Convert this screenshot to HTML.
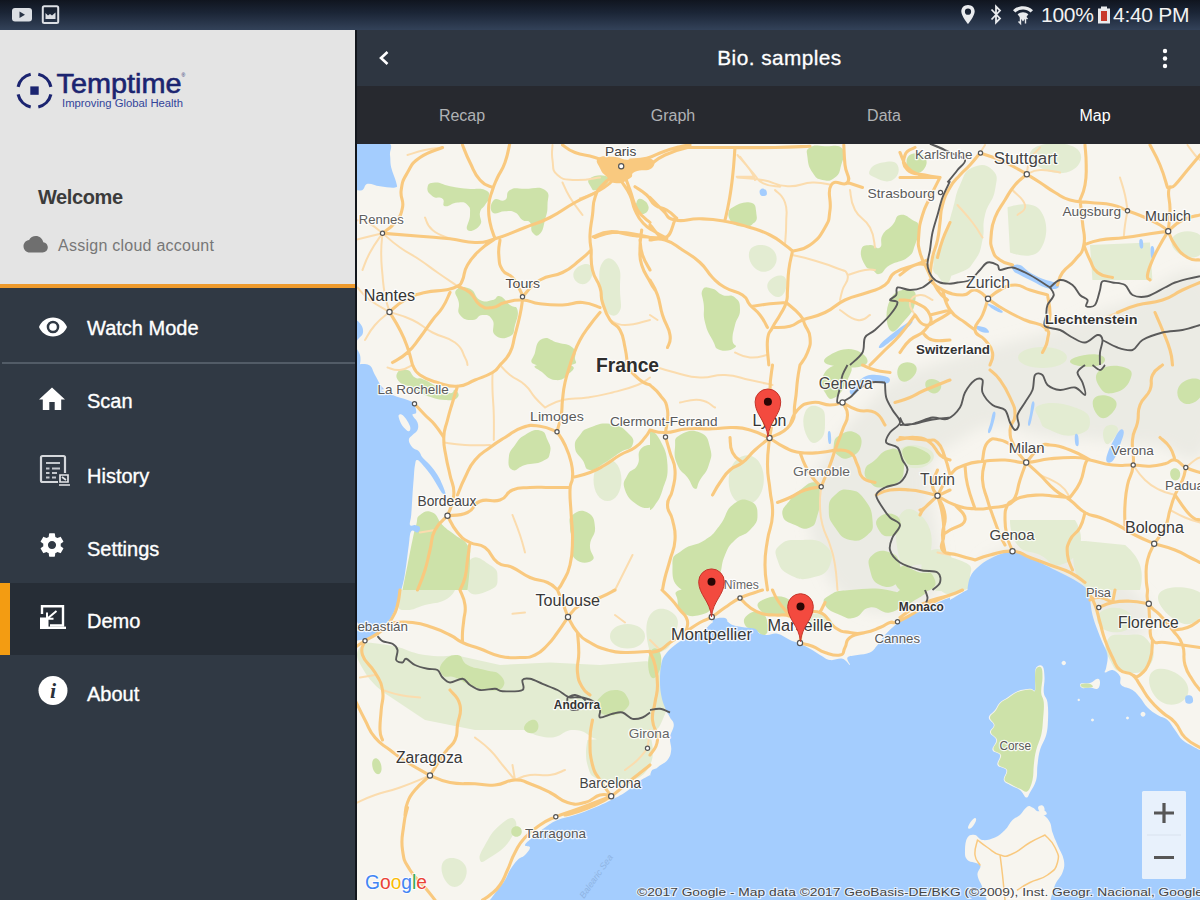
<!DOCTYPE html>
<html lang="en">
<head>
<meta charset="utf-8">
<title>Bio. samples - Map</title>
<style>
html,body{margin:0;padding:0;}
body{width:1200px;height:900px;overflow:hidden;position:relative;background:#303944;font-family:"Liberation Sans",sans-serif;}
.abs{position:absolute;}
#status{left:0;top:0;width:1200px;height:29.5px;background:linear-gradient(#10151f 0%,#1b2536 42%,#334259 100%);}
#status .txt{position:absolute;top:3px;color:#f2f2f2;font-size:21px;line-height:24px;letter-spacing:-0.3px;white-space:nowrap;}
#drawerTop{left:0;top:29.5px;width:355.5px;height:255.5px;background:#e4e4e4;}
#orange{left:0;top:284px;width:355.5px;height:4px;background:#ee9a2c;}
#drawer{left:0;top:288px;width:355.5px;height:612px;background:#303944;}
#edge{left:354.5px;top:29.5px;width:2.5px;height:871px;background:#12161c;}
.mi{position:absolute;left:0;width:355px;height:72px;}
#drawer .lbl{position:absolute;left:87px;color:#fff;font-size:20px;line-height:24px;white-space:nowrap;-webkit-text-stroke:0.35px #fff;}
.mi svg{position:absolute;}
#appbar{left:357px;top:29.5px;width:843px;height:56.5px;background:#2e3641;}
#tabs{left:357px;top:86px;width:843px;height:58px;background:#27292f;}
.tab{position:absolute;top:19.5px;width:120px;text-align:center;color:#b0b2b5;font-size:16px;line-height:20px;}
#map{left:357px;top:144px;width:843px;height:756px;background:#f6f3ec;overflow:hidden;}
</style>
</head>
<body>
<!-- status bar -->
<div id="status" class="abs">
  <svg class="abs" style="left:0;top:0" width="80" height="30" viewBox="0 0 80 30">
    <rect x="12" y="8" width="20" height="13.5" rx="3" fill="#dcdfe4"/>
    <path d="M19.5 11.5 L25 14.7 L19.5 18z" fill="#283345"/>
    <rect x="42.8" y="6.3" width="15.4" height="16.6" rx="1.5" fill="none" stroke="#dcdfe4" stroke-width="2"/>
    <path d="M45.5 19 L45.5 13 L48 15.5 L50 14 L52 15.5 L55.5 12.5 L55.5 19z" fill="#dcdfe4"/>
  </svg>
  <svg class="abs" style="left:950px;top:0" width="90" height="30" viewBox="0 0 90 30">
    <!-- location pin -->
    <path d="M18 5 C14 5 11.3 7.8 11.3 11.5 C11.3 16 18 24 18 24 C18 24 24.7 16 24.7 11.5 C24.7 7.8 22 5 18 5z M18 8.6 a3.1 3.1 0 1 1 0 6.2 a3.1 3.1 0 1 1 0 -6.2z" fill="#e9ebee" fill-rule="evenodd"/>
    <!-- bluetooth -->
    <path d="M41.5 9.5 L50 18.5 L46 22.5 L46 6.5 L50 10.5 L41.5 19.5" fill="none" stroke="#e9ebee" stroke-width="1.8"/>
    <!-- wifi -->
    <path d="M63 10.2 C68 4.8 78 4.8 83 10.2 L80.6 12.6 C76.5 8.6 69.5 8.6 65.4 12.6z" fill="#e9ebee"/>
    <path d="M67.6 14.3 C70.5 11.6 75.5 11.6 78.4 14.3 L73 21.5z" fill="#e9ebee"/>
    <path d="M70.5 17 l0 6.5 l-2 -2 M75.5 23.5 l0 -6.5 l2 2" fill="none" stroke="#e9ebee" stroke-width="1.4"/>
  </svg>
  <div class="txt" style="left:1041px;">100%</div>
  <svg class="abs" style="left:1095px;top:0" width="20" height="30" viewBox="0 0 20 30">
    <path d="M3 8.5 h3 v-2 h6 v2 h3 v15 h-12z" fill="#e9ebee"/>
    <path d="M6 11 h6 v10 h-6z" fill="#c8392b"/>
  </svg>
  <div class="txt" style="left:1113px;">4:40 PM</div>
</div>

<!-- drawer header -->
<div id="drawerTop" class="abs">
  <svg class="abs" style="left:10px;top:36px" width="200" height="50" viewBox="0 0 200 50" font-family="Liberation Sans, sans-serif">
    <g fill="none" stroke="#1b2470" stroke-width="3.1"><path d="M28.3 8.2 A16.8 16.8 0 0 1 40.9 20.8"/><path d="M40.9 28.4 A16.8 16.8 0 0 1 28.3 41.0"/><path d="M20.7 41.0 A16.8 16.8 0 0 1 8.1 28.4"/><path d="M8.1 20.8 A16.8 16.8 0 0 1 20.7 8.2"/></g>
    <rect x="20.300" y="20.400" width="8.400" height="8.400" fill="#1b2470"/>
    <text x="46.500" y="26.500" font-size="27.500" fill="#1b2470" stroke="#1b2470" stroke-width="0.600" textLength="125" lengthAdjust="spacingAndGlyphs">Temptime</text>
    <text x="171.500" y="10.500" font-size="5" fill="#1b2470">®</text>
    <text x="52" y="41.300" font-size="10" fill="#33449a" textLength="121" lengthAdjust="spacingAndGlyphs">Improving Global Health</text>
  </svg>
  <div class="abs" style="left:38px;top:155.500px;color:#3b3b3b;font-size:20px;font-weight:bold;line-height:24px;letter-spacing:-0.4px;">Welcome</div>
  <svg class="abs" style="left:21px;top:204px" width="28" height="20" viewBox="0 0 28 20">
    <path d="M22.3 8.2 C21.6 4.6 18.5 2 14.8 2 C11.9 2 9.4 3.6 8.1 6 C4.9 6.4 2.5 9 2.5 12.2 C2.5 15.7 5.3 18.5 8.8 18.5 L21.6 18.5 C24.5 18.5 26.8 16.2 26.8 13.3 C26.8 10.6 24.7 8.4 22.3 8.2z" fill="#6f6f6f"/>
  </svg>
  <div class="abs" style="left:58px;top:206px;color:#777;font-size:16px;line-height:20px;letter-spacing:0.25px;white-space:nowrap;">Assign cloud account</div>
</div>
<div id="orange" class="abs"></div>

<!-- drawer menu -->
<div id="drawer" class="abs">
  <div class="abs" style="left:2px;top:74px;width:353px;height:2px;background:#525c67;"></div>
  <div class="abs" style="left:0;top:295px;width:355px;height:72px;background:#262d36;"></div>
  <div class="abs" style="left:0;top:295px;width:10px;height:72px;background:#f39c12;"></div>
  <!-- Watch Mode -->
  <svg class="abs" style="left:38px;top:27px" width="30" height="24" viewBox="0 0 30 24"><path d="M15 2.5 C8.5 2.5 3.2 6.4 1 12 C3.2 17.6 8.5 21.5 15 21.5 C21.5 21.5 26.800 17.6 29 12 C26.8 6.400 21.5 2.5 15 2.5z M15 18.300 a6.300 6.300 0 1 1 0 -12.600 a6.300 6.300 0 1 1 0 12.600z M15 8.200 a3.800 3.800 0 1 0 0 7.600 a3.800 3.800 0 1 0 0 -7.600z" fill="#fff" fill-rule="evenodd"/></svg>
  <div class="lbl" style="top:28px;">Watch Mode</div>
  <!-- Scan -->
  <svg class="abs" style="left:38px;top:98px" width="28" height="26" viewBox="0 0 28 26"><path d="M14 1.500 L1 13.500 L4.800 13.500 L4.800 24 L11.300 24 L11.300 16 L16.700 16 L16.700 24 L23.200 24 L23.200 13.500 L27 13.500z" fill="#fff"/></svg>
  <div class="lbl" style="top:101px;">Scan</div>
  <!-- History -->
  <svg class="abs" style="left:38px;top:165px" width="34" height="36" viewBox="0 0 34 36">
    <rect x="3" y="3" width="24" height="26" rx="1.500" fill="none" stroke="#d5d8dc" stroke-width="2.200"/>
    <path d="M8 10 H22 M8 15.500 H11.500 M14 15.500 H22 M8 20 H11.500 M14 20 H19 M8 24.500 H11.500 M14 24.500 H18" stroke="#c4c8cd" stroke-width="2" fill="none"/>
    <rect x="20" y="20" width="12" height="13" fill="#303944"/>
    <path d="M22 22 H30 V29 H22z M24 24 L28 27 M21 32 H32" stroke="#e3e5e8" stroke-width="1.700" fill="none"/>
  </svg>
  <div class="lbl" style="top:176px;">History</div>
  <!-- Settings -->
  <svg class="abs" style="left:38px;top:243px" width="28" height="28" viewBox="0 0 24 24"><path d="M19.430 12.980c.040-.320.070-.640.070-.980s-.030-.660-.070-.980l2.110-1.650c.190-.150.240-.420.120-.640l-2-3.460c-.120-.220-.390-.300-.610-.220l-2.490 1c-.520-.400-1.080-.730-1.690-.980l-.380-2.650C14.460 2.180 14.250 2 14 2h-4c-.250 0-.460.180-.490.420l-.380 2.650c-.610.250-1.170.590-1.690.980l-2.490-1c-.230-.090-.490 0-.610.220l-2 3.460c-.130.220-.070.490.120.640l2.110 1.650c-.040.320-.070.650-.070.980s.030.660.070.980l-2.110 1.650c-.190.150-.240.420-.120.640l2 3.460c.120.220.390.300.610.220l2.490-1c.520.400 1.080.730 1.690.980l.380 2.650c.030.240.240.420.490.420h4c.250 0 .460-.180.490-.420l.380-2.650c.610-.250 1.170-.590 1.690-.980l2.490 1c.230.090.490 0 .610-.220l2-3.460c.120-.220.070-.490-.120-.640l-2.110-1.650zM12 15.500c-1.930 0-3.500-1.570-3.500-3.500s1.570-3.500 3.500-3.500 3.500 1.570 3.500 3.500-1.570 3.500-3.500 3.500z" fill="#fff"/></svg>
  <div class="lbl" style="top:249px;">Settings</div>
  <!-- Demo -->
  <svg class="abs" style="left:38px;top:315px" width="30" height="28" viewBox="0 0 30 28">
    <path d="M4 11 V3.200 H25 V22.500 H12" fill="none" stroke="#fff" stroke-width="2.400"/>
    <rect x="2" y="14.500" width="8.500" height="11.500" fill="#fff"/>
    <path d="M10 24.800 H28" stroke="#fff" stroke-width="2.400"/>
    <path d="M18.500 8 L9.500 15.500 M9 9.500 L9 15.800 L15.500 15.800" stroke="#fff" stroke-width="2" fill="none"/>
  </svg>
  <div class="lbl" style="top:321px;">Demo</div>
  <!-- About -->
  <svg class="abs" style="left:37px;top:387px" width="32" height="32" viewBox="0 0 32 32"><circle cx="16" cy="15.500" r="14.500" fill="#fff"/><text x="16" y="23" text-anchor="middle" font-family="Liberation Serif,serif" font-style="italic" font-weight="bold" font-size="22" fill="#2a313b">i</text></svg>
  <div class="lbl" style="top:394px;">About</div>
</div>

<div id="edge" class="abs"></div>

<!-- app bar -->
<div id="appbar" class="abs">
  <svg class="abs" style="left:17px;top:18px" width="20" height="20" viewBox="0 0 20 20"><path d="M13.5 4 L7 10 L13.5 16" fill="none" stroke="#fff" stroke-width="2.6"/></svg>
  <div class="abs" style="left:1.500px;top:15.500px;width:842px;text-align:center;color:#fff;font-size:20.800px;line-height:26px;letter-spacing:0.45px;-webkit-text-stroke:0.3px #fff;">Bio. samples</div>
  <svg class="abs" style="left:801px;top:16px" width="14" height="26" viewBox="0 0 14 26"><circle cx="7" cy="5" r="2.2" fill="#fff"/><circle cx="7" cy="12.5" r="2.2" fill="#fff"/><circle cx="7" cy="20" r="2.2" fill="#fff"/></svg>
</div>

<!-- tabs -->
<div id="tabs" class="abs">
  <div class="tab" style="left:45px;">Recap</div>
  <div class="tab" style="left:256px;">Graph</div>
  <div class="tab" style="left:467px;">Data</div>
  <div class="tab" style="left:678px;color:#fff;">Map</div>
</div>

<!-- map -->
<div id="map" class="abs">
<svg width="843" height="756" viewBox="357 144 843 756" style="position:absolute;left:0;top:0;display:block" font-family="Liberation Sans, sans-serif">
<rect x="357" y="144" width="843" height="756" fill="#f7f5ef"/>
<defs><filter id="tb" x="-10%" y="-10%" width="120%" height="120%"><feGaussianBlur stdDeviation="7"/></filter></defs>
<path fill="#e0e1da" fill-opacity="0.5" filter="url(#tb)" d="M872 400 C890.7 380.8 881.9 388.1 900 378 C918.1 367.9 913.3 370.8 940 362 C966.7 353.2 968 354.1 1000 345 C1032 335.9 1028 338.7 1060 328 C1092 317.3 1080 316.5 1120 305 C1160 293.5 1186 249 1210 285 C1234 321 1226 397.3 1210 440 C1194 482.7 1179.3 445 1150 445 C1120.7 445 1129.3 442.7 1100 440 C1070.7 437.3 1066.7 439 1040 435 C1013.3 431 1021.3 423.7 1000 425 C978.7 426.3 978.7 428 960 440 C941.3 452 936.7 448.7 930 470 C923.3 491.3 932.3 496 935 520 C937.7 544 941.3 538.7 940 560 C938.7 581.3 943.3 586.1 930 600 C916.7 613.9 911.3 612 890 612 C868.7 612 868.7 613.9 850 600 C831.3 586.1 830.7 586.7 820 560 C809.3 533.3 807.3 529.3 810 500 C812.7 470.7 813.5 476.7 830 450 C846.5 423.3 853.3 419.2 872 400Z M985 560 C995.7 550.7 1012 545 1040 545 C1068 545 1066 549.3 1090 560 C1114 570.7 1114 569 1130 585 C1146 601 1152.7 605.3 1150 620 C1147.3 634.7 1138.7 645.3 1120 640 C1101.3 634.7 1101.3 616 1080 600 C1058.7 584 1061.3 585.3 1040 580 C1018.7 574.7 1014.7 585.3 1000 580 C985.3 574.7 974.3 569.3 985 560Z"/>
<path fill="#e3ecd2" d="M602.5 262.5 C607.2 255.8 612.8 257.7 617.5 265 C622.2 272.3 619.7 277.3 620 290 C620.3 302.7 622.8 307.2 618.8 312.5 C614.8 317.8 610 316 605 310 C600 304 600.7 302.7 600 290 C599.3 277.3 597.8 269.2 602.5 262.5Z M575 270 C578.3 265.3 586 262.3 590 265 C594 267.7 593.3 275.3 590 280 C586.7 284.7 581.5 285.2 577.5 282.5 C573.5 279.8 571.7 274.7 575 270Z M870 170 C872 166 875.2 163.8 882.5 162.5 C889.8 161.2 894.8 160.3 897.5 165 C900.2 169.7 898.5 176.7 892.5 180 C886.5 183.3 881 180.2 875 177.5 C869 174.8 868 174 870 170Z M935 255 C938.3 247.7 946 240.8 950 247.5 C954 254.2 953.3 272.7 950 280 C946.7 287.3 941.5 281.7 937.5 275 C933.5 268.3 931.7 262.3 935 255Z M750 250 C753.3 244 763.3 243.5 770 247.5 C776.7 251.5 778.3 259 775 265 C771.7 271 764.2 274 757.5 270 C750.8 266 746.7 256 750 250Z M770 280 C774 276 781.7 273.5 785 277.5 C788.3 281.5 786.5 291 782.5 295 C778.5 299 773.3 296.5 770 292.5 C766.7 288.5 766 284 770 280Z M972.5 167.5 C981.2 163.5 986.5 164 992.5 170 C998.5 176 997 178 995 190 C993 202 988.3 201.7 985 215 C981.7 228.3 985.2 228 982.5 240 C979.8 252 981 251.3 975 260 C969 268.7 970 268.5 960 272.5 C950 276.5 944.2 279 937.5 275 C930.8 271 933 268.2 935 257.5 C937 246.8 940.3 247.7 945 235 C949.7 222.3 948.5 223.3 952.5 210 C956.5 196.7 954.7 196.3 960 185 C965.3 173.7 963.8 171.5 972.5 167.5Z M1007.5 207.5 C1007.5 207.5 1031.3 198.7 1040 210 C1048.7 221.3 1048 238.7 1040 250 C1032 261.3 1010 252.5 1010 252.5 L1007.5 207.5Z M1090 245 L1150 242.5 C1150 242.5 1152.5 280 1152.5 280 L1092.5 280 C1092.5 280 1090 245 1090 245Z M1175 235 C1181 230.3 1193.3 229.7 1200 235 C1206.7 240.3 1206 250.3 1200 255 C1194 259.7 1184.2 257.8 1177.5 252.5 C1170.8 247.2 1169 239.7 1175 235Z M1025 350 C1034.3 346 1050.7 346 1060 350 C1069.3 354 1069.3 361 1060 365 C1050.7 369 1034.3 369 1025 365 C1015.7 361 1015.7 354 1025 350Z M1035 147.5 C1044.3 142.2 1065 141.5 1075 147.5 C1085 153.5 1081.8 164.7 1072.5 170 C1063.2 175.3 1050 173.5 1040 167.5 C1030 161.5 1025.7 152.8 1035 147.5Z M470 560 C476 553.3 482.7 560.3 490 565 C497.3 569.7 497.5 570.8 497.5 577.5 C497.5 584.2 498 586.7 490 590 C482 593.3 472.8 598 467.5 590 C462.2 582 464 566.7 470 560Z M597.5 465 C602.8 457 612.2 457 617.5 465 C622.8 473 622.8 487 617.5 495 C612.2 503 602.8 503 597.5 495 C592.2 487 592.2 473 597.5 465Z M805 412.5 C808.3 404.5 814.7 404.8 820 407.5 C825.3 410.2 825 413.8 825 422.5 C825 431.2 824.7 436 820 440 C815.3 444 811.5 444.8 807.5 437.5 C803.5 430.2 801.7 420.5 805 412.5Z M902.5 447.5 C909.2 443.5 923.3 445.3 930 450 C936.7 454.7 934.2 461 927.5 465 C920.8 469 911.7 469.7 905 465 C898.3 460.3 895.8 451.5 902.5 447.5Z M780 545 C786 539.7 788 540 800 540 C812 540 817 538.3 825 545 C833 551.7 833.3 556.3 830 565 C826.7 573.7 823.2 574.8 812.5 577.5 C801.8 580.2 799.3 579.7 790 575 C780.7 570.3 780.2 568 777.5 560 C774.8 552 774 550.3 780 545Z M925 555 C931 547 943.3 547 950 555 C956.7 563 956 577 950 585 C944 593 934.2 593 927.5 585 C920.8 577 919 563 925 555Z M732.5 465 C738.5 454.3 750.2 452 757.5 460 C764.8 468 766 484.3 760 495 C754 505.7 742.3 508 735 500 C727.7 492 726.5 475.7 732.5 465Z M1040 405 C1049.3 401.7 1061.7 402.8 1075 407.5 C1088.3 412.2 1090 415.2 1090 422.5 C1090 429.8 1085.7 433 1075 435 C1064.3 437 1059.3 434 1050 430 C1040.7 426 1042.7 426.7 1040 420 C1037.3 413.3 1030.7 408.3 1040 405Z M1105 427.5 C1108.3 423.5 1115.5 424.2 1117.5 427.5 C1119.5 430.8 1115.8 436 1112.5 440 C1109.2 444 1107 445.8 1105 442.5 C1103 439.2 1101.7 431.5 1105 427.5Z M1010 520 L1075 520 C1075 520 1084 533 1080 545 C1076 557 1070.7 562.3 1060 565 C1049.3 567.7 1051.3 560.3 1040 555 C1028.7 549.7 1025.5 554.3 1017.5 545 C1009.5 535.7 1010 520 1010 520Z M1075 540 L1125 545 C1125 545 1136 553 1140 565 C1144 577 1140 590 1140 590 L1090 590 C1090 590 1079 583.3 1075 570 C1071 556.7 1075 540 1075 540Z M900 515 C906.7 504.3 917 509.3 925 520 C933 530.7 932.7 543 930 555 C927.3 567 923 563.7 915 565 C907 566.3 904 573.3 900 560 C896 546.7 893.3 525.7 900 515Z M932.5 560 C939.2 552.7 955 557.8 965 562.5 C975 567.2 970 570.2 970 577.5 C970 584.8 973 586.7 965 590 C957 593.3 948.7 598 940 590 C931.3 582 925.8 567.3 932.5 560Z M401.2 590 L455 590 C455 590 453 596 445 600 C437 604 435 602.3 425 605 C415 607.7 414.8 610 407.5 610 C400.2 610 399.2 610.3 397.5 605 C395.8 599.7 401.2 590 401.2 590Z M360 647.5 C366 640.2 370.2 643 387.5 645 C404.8 647 407 652.3 425 655 C443 657.7 455 655 455 655 L500 665 L550 662.5 L600 665 L645 661.2 C645 661.2 659 661 665 670 C671 679 668.2 681.7 667.5 695 C666.8 708.3 667.2 710 662.5 720 C657.8 730 660 727.2 650 732.5 C640 737.8 638.3 738 625 740 C611.7 742 613.3 742.7 600 740 C586.7 737.3 588.3 730.7 575 730 C561.7 729.3 563.3 737.5 550 737.5 C536.7 737.5 525 730 525 730 L475 730 L425 720 L387.5 695 C387.5 695 372.3 685.2 365 672.5 C357.7 659.8 354 654.8 360 647.5Z M615 627.5 C621.7 622.8 633.3 622.8 640 627.5 C646.7 632.2 646.7 640.3 640 645 C633.3 649.7 621.7 649.7 615 645 C608.3 640.3 608.3 632.2 615 627.5Z M587.5 740 L650 735 C650 735 656.7 752.3 650 765 C643.3 777.7 638.3 778.5 625 782.5 C611.7 786.5 610 784.7 600 780 C590 775.3 590.8 775.7 587.5 765 C584.2 754.3 587.5 740 587.5 740Z M650 615 C656.7 605 669 608.3 675 615 C681 621.7 676.5 630 672.5 640 C668.5 650 666 649.2 660 652.5 C654 655.8 652.7 662.5 650 652.5 C647.3 642.5 643.3 625 650 615Z M805 617.5 C809 613.5 818.3 612.3 825 615 C831.7 617.7 834 623.5 830 627.5 C826 631.5 816.7 632.7 810 630 C803.3 627.3 801 621.5 805 617.5Z M1107.5 640 C1111.5 633.3 1114.3 635 1125 635 C1135.7 635 1140.8 632 1147.5 640 C1154.2 648 1156 656.3 1150 665 C1144 673.7 1135.7 673.8 1125 672.5 C1114.3 671.2 1114.7 668.7 1110 660 C1105.3 651.3 1103.5 646.7 1107.5 640Z M1160 592.5 C1166.7 585.2 1189.3 585.8 1200 592.5 C1210.7 599.2 1206.7 610.2 1200 617.5 C1193.3 624.8 1185.7 626.7 1175 620 C1164.3 613.3 1153.3 599.8 1160 592.5Z M1150 675 C1153.3 667 1165 667.2 1175 672.5 C1185 677.8 1190.8 687 1187.5 695 C1184.2 703 1172.5 707.8 1162.5 702.5 C1152.5 697.2 1146.7 683 1150 675Z M1100 612.5 C1105.3 607.2 1117 606 1125 610 C1133 614 1135.3 622.2 1130 627.5 C1124.7 632.8 1113 634 1105 630 C1097 626 1094.7 617.8 1100 612.5Z M500 825 C508 818.3 512.3 816 515 820 C517.7 824 516.7 830 510 840 C503.3 850 498 852.2 490 857.5 C482 862.8 481.3 863.3 480 860 C478.7 856.7 479.7 854.3 485 845 C490.3 835.7 492 831.7 500 825Z M445 860 C450.3 856 461 858.3 465 865 C469 871.7 465.3 881 460 885 C454.7 889 449 886.7 445 880 C441 873.3 439.7 864 445 860Z"/>
<path fill="#cde2a9" d="M427.5 187.5 C428.2 183.8 429 182.8 435 182.5 C441 182.2 441.3 184.5 450 186.2 C458.7 187.9 458.2 187.8 467.5 188.8 C476.8 189.8 479.3 187.7 485 190 C490.7 192.3 488.8 193.5 488.8 197.5 C488.8 201.5 487.3 201 485 205 C482.7 209 481.3 207.2 480 212.5 C478.7 217.8 483.3 220.3 480 225 C476.7 229.7 470.2 232.7 467.5 230 C464.8 227.3 470 221.7 470 215 C470 208.3 470.8 208.3 467.5 205 C464.2 201.7 463.5 202.2 457.5 202.5 C451.5 202.8 449 207.2 445 206.2 C441 205.2 445.8 201.5 442.5 198.8 C439.2 196.1 436.5 199.2 432.5 196.2 C428.5 193.2 426.8 191.2 427.5 187.5Z M510 190 C515.3 187 515.7 188.8 525 188.8 C534.3 188.8 539 185.7 545 190 C551 194.3 547.5 197 547.5 205 C547.5 213 547 212.3 545 220 C543 227.7 543.3 230.5 540 233.8 C536.7 237.1 535.2 235.5 532.5 232.5 C529.8 229.5 532.7 225.8 530 222.5 C527.3 219.2 526.5 222.7 522.5 220 C518.5 217.3 519.7 214.8 515 212.5 C510.3 210.2 511 211.2 505 211.2 C499 211.2 495.5 215.5 492.5 212.5 C489.5 209.5 490.5 203.3 493.8 200 C497.1 196.7 500.7 202.7 505 200 C509.3 197.3 504.7 193 510 190Z M637.5 200 C639.5 197.3 643.5 199.5 646.2 202.5 C648.9 205.5 649.5 208.5 647.5 211.2 C645.5 213.9 641.5 215.5 638.8 212.5 C636.1 209.5 635.5 202.7 637.5 200Z M456.2 290 C459.2 286.3 463.7 286.1 470 288.8 C476.3 291.5 474 297 480 300 C486 303 487.2 301 492.5 300 C497.8 299 495.3 294.9 500 296.2 C504.7 297.5 505.3 301.3 510 305 C514.7 308.7 516.2 304.7 517.5 310 C518.8 315.3 517 318 515 325 C513 332 515.3 333.5 510 336.2 C504.7 338.9 499.7 339.3 495 335 C490.3 330.7 495.8 325.3 492.5 320 C489.2 314.7 487.8 315 482.5 315 C477.2 315 478.5 320 472.5 320 C466.5 320 463.7 319.7 460 315 C456.3 310.3 459.8 309.2 458.8 302.5 C457.8 295.8 453.2 293.7 456.2 290Z M542.5 338.8 C548.5 336.1 549.5 340.2 557.5 342.5 C565.5 344.8 567.8 343.5 572.5 347.5 C577.2 351.5 575.7 352.8 575 357.5 C574.3 362.2 580.3 363 570 365 C559.7 367 545.5 368.3 536.2 365 C526.9 361.7 533.3 359.5 535 352.5 C536.7 345.5 536.5 341.5 542.5 338.8Z M810 147.5 C814.7 144.5 816.3 145.9 825 146.2 C833.7 146.5 838.2 143.8 842.5 148.8 C846.8 153.8 843.2 157.3 841.2 165 C839.2 172.7 840 173.5 835 177.5 C830 181.5 828.5 181.3 822.5 180 C816.5 178.7 816.5 178.5 812.5 172.5 C808.5 166.5 808.2 164.2 807.5 157.5 C806.8 150.8 805.3 150.5 810 147.5Z M732.5 207.5 C737.8 204.2 743.7 201.2 750 202.5 C756.3 203.8 755.5 206.8 756.2 212.5 C756.9 218.2 758.2 220.5 752.5 223.8 C746.8 227.1 741 227.3 735 225 C729 222.7 730.7 219.7 730 215 C729.3 210.3 727.2 210.8 732.5 207.5Z M702.5 290 C704.8 285.7 707.2 287.5 712.5 288.8 C717.8 290.1 716.5 292.7 722.5 295 C728.5 297.3 730.3 293.5 735 297.5 C739.7 301.5 740 302.7 740 310 C740 317.3 737 317 735 325 C733 333 732.5 334 732.5 340 C732.5 346 738.3 344.8 735 347.5 C731.7 350.2 726 352 720 350 C714 348 716.5 347.3 712.5 340 C708.5 332.7 707.3 331.8 705 322.5 C702.7 313.2 704.5 313.7 703.8 305 C703.1 296.3 700.2 294.3 702.5 290Z M900 215 C905.3 213.7 907.5 216.7 912.5 220 C917.5 223.3 918.1 220.8 918.8 227.5 C919.5 234.2 918 237 915 245 C912 253 914.2 252.2 907.5 257.5 C900.8 262.8 897.3 260.7 890 265 C882.7 269.3 884.7 272.5 880 273.8 C875.3 275.1 876.5 272.3 872.5 270 C868.5 267.7 868 270.3 865 265 C862 259.7 859.9 255.3 861.2 250 C862.5 244.7 865 245.7 870 245 C875 244.3 876.7 250.2 880 247.5 C883.3 244.8 879.2 241 882.5 235 C885.8 229 887.8 230.3 892.5 225 C897.2 219.7 894.7 216.3 900 215Z M907.5 157.5 C910.2 152.8 917.8 152.3 922.5 155 C927.2 157.7 927.7 162.8 925 167.5 C922.3 172.2 917.2 175.2 912.5 172.5 C907.8 169.8 904.8 162.2 907.5 157.5Z M890 300 C895.3 289.3 903.3 289.3 910 290 C916.7 290.7 916.3 294.5 915 302.5 C913.7 310.5 911.7 312.7 905 320 C898.3 327.3 894 335.3 890 330 C886 324.7 884.7 310.7 890 300Z M830 355 C836.7 351 845.7 347.3 855 350 C864.3 352.7 871.7 361 865 365 C858.3 369 839.3 367.7 830 365 C820.7 362.3 823.3 359 830 355Z M1075 357.5 C1081.7 354.8 1093.3 353 1100 355 C1106.7 357 1106.7 362.3 1100 365 C1093.3 367.7 1081.7 367 1075 365 C1068.3 363 1068.3 360.2 1075 357.5Z M397.5 372.5 C399.5 369.2 402.8 368.7 407.5 370 C412.2 371.3 410.3 374.8 415 377.5 C419.7 380.2 416.3 376 425 380 C433.7 384 439.5 389.8 447.5 392.5 C455.5 395.2 452.3 388.7 455 390 C457.7 391.3 460.2 394.8 457.5 397.5 C454.8 400.2 453.7 400.7 445 400 C436.3 399.3 433.7 398.3 425 395 C416.3 391.7 419.2 390.8 412.5 387.5 C405.8 384.2 404 386.5 400 382.5 C396 378.5 395.5 375.8 397.5 372.5Z M525 435 C531.7 431.1 534 429.2 540 430.5 C546 431.8 544.8 434.1 547.5 440 C550.2 445.9 551.3 446.8 550 452.5 C548.7 458.2 549.2 457.9 542.5 461.2 C535.8 464.5 533 462.7 525 465 C517 467.3 516.8 472 512.5 470 C508.2 468 508.1 464.2 508.8 457.5 C509.5 450.8 510.7 451 515 445 C519.3 439 518.3 438.9 525 435Z M590 427.5 C598 424.5 600 422.5 610 423.8 C620 425.1 621.5 426.8 627.5 432.5 C633.5 438.2 634.5 439.7 632.5 445 C630.5 450.3 627.3 447.8 620 452.5 C612.7 457.2 613 457.8 605 462.5 C597 467.2 596 470.7 590 470 C584 469.3 586.5 466 582.5 460 C578.5 454 575.7 454.2 575 447.5 C574.3 440.8 576 440.3 580 435 C584 429.7 582 430.5 590 427.5Z M640 450 C643.3 444.7 650 445 650 445 L650 507.5 C650 507.5 644.2 509.7 637.5 505 C630.8 500.3 627.7 498 625 490 C622.3 482 624.2 481.7 627.5 475 C630.8 468.3 634.2 471.7 637.5 465 C640.8 458.3 636.7 455.3 640 450Z M537.5 365 C544.8 363 562 362.3 570 365 C578 367.7 571.5 371 567.5 375 C563.5 379 561.7 380.7 555 380 C548.3 379.3 547.2 376.5 542.5 372.5 C537.8 368.5 530.2 367 537.5 365Z M572.5 515 C577.2 511 581.5 509.2 587.5 512.5 C593.5 515.8 594.3 518.8 595 527.5 C595.7 536.2 590.7 536.3 590 545 C589.3 553.7 596.5 556.3 592.5 560 C588.5 563.7 580.3 564.1 575 558.8 C569.7 553.5 573.8 548.3 572.5 540 C571.2 531.7 570 534.2 570 527.5 C570 520.8 567.8 519 572.5 515Z M420 515 C424.3 511.7 426.5 509.8 432.5 512.5 C438.5 515.2 436.5 519 442.5 525 C448.5 531 448.3 529.7 455 535 C461.7 540.3 463.5 538.3 467.5 545 C471.5 551.7 470 548 470 560 C470 572 467.5 590 467.5 590 L402.5 590 C402.5 590 404.8 578.3 407.5 565 C410.2 551.7 410.2 550.7 412.5 540 C414.8 529.3 414.2 531.7 416.2 525 C418.2 518.3 415.7 518.3 420 515Z M680 435 C686.7 431 692 429.2 700 432.5 C708 435.8 707.7 438.8 710 447.5 C712.3 456.2 711.5 456.3 708.8 465 C706.1 473.7 703.7 473.7 700 480 C696.3 486.3 698.3 489.5 695 488.8 C691.7 488.1 692.2 483.8 687.5 477.5 C682.8 471.2 680.8 473 677.5 465 C674.2 457 674.3 455.5 675 447.5 C675.7 439.5 673.3 439 680 435Z M650 430 C650 430 655.3 430.7 660 440 C664.7 449.3 666.8 451.7 667.5 465 C668.2 478.3 665.8 479.3 662.5 490 C659.2 500.7 658.3 499.7 655 505 C651.7 510.3 650 510 650 510 L650 430Z M732.5 505 C740.5 498.7 743.3 498.5 750 501.2 C756.7 503.9 757.5 507.3 757.5 515 C757.5 522.7 756 523.3 750 530 C744 536.7 741.7 533.3 735 540 C728.3 546.7 729 545.7 725 555 C721 564.3 722.7 565.7 720 575 C717.3 584.3 725 586 715 590 C705 594 693.8 596.7 682.5 590 C671.2 583.3 672.5 575.7 672.5 565 C672.5 554.3 673.8 556.7 682.5 550 C691.2 543.3 695 546.7 705 540 C715 533.3 712.7 534.3 720 525 C727.3 515.7 724.5 511.3 732.5 505Z M800 490 C806.7 485.3 809.7 481.2 815 482.5 C820.3 483.8 819.3 486.3 820 495 C820.7 503.7 820.2 506.3 817.5 515 C814.8 523.7 816 524.8 810 527.5 C804 530.2 802.3 528.3 795 525 C787.7 521.7 783.8 521.7 782.5 515 C781.2 508.3 785.3 506.7 790 500 C794.7 493.3 793.3 494.7 800 490Z M835 495 C840.7 489.7 842 488.7 850 490 C858 491.3 859 492 865 500 C871 508 871.8 510.7 872.5 520 C873.2 529.3 873.5 529.7 867.5 535 C861.5 540.3 858.7 542 850 540 C841.3 538 840.7 535.5 835 527.5 C829.3 519.5 828.8 518.7 828.8 510 C828.8 501.3 829.3 500.3 835 495Z M840 435 C845.7 431.7 849.3 429.8 855 432.5 C860.7 435.2 862.5 438.3 861.2 445 C859.9 451.7 856.3 454.8 850 457.5 C843.7 460.2 841.8 458.3 837.5 455 C833.2 451.7 833.1 450.3 833.8 445 C834.5 439.7 834.3 438.3 840 435Z M822.5 377.5 C825.2 370.2 827.7 368.3 835 365 C842.3 361.7 846.7 361 850 365 C853.3 369 851.5 371.3 847.5 380 C843.5 388.7 841 394.2 835 397.5 C829 400.8 828.3 397.8 825 392.5 C821.7 387.2 819.8 384.8 822.5 377.5Z M887.5 450 C894.2 448 895.7 447.2 900 452.5 C904.3 457.8 904.5 462 903.8 470 C903.1 478 903.2 477.8 897.5 482.5 C891.8 487.2 889.8 487.5 882.5 487.5 C875.2 487.5 874.7 487.2 870 482.5 C865.3 477.8 863.7 476 865 470 C866.3 464 869 465.3 875 460 C881 454.7 880.8 452 887.5 450Z M878.8 517.5 C883.1 513.5 889.3 512.3 895 515 C900.7 517.7 901.3 521.8 900 527.5 C898.7 533.2 895.7 535.5 890 536.2 C884.3 536.9 881.8 535 878.8 530 C875.8 525 874.5 521.5 878.8 517.5Z M872.5 555 C877.8 550.3 882.7 549.8 890 552.5 C897.3 555.2 898 557 900 565 C902 573 902.8 577.2 897.5 582.5 C892.2 587.8 887.3 588.3 880 585 C872.7 581.7 872 578 870 570 C868 562 867.2 559.7 872.5 555Z M905 447.5 C909.7 444.8 915.8 446.7 922.5 450 C929.2 453.3 932 456 930 460 C928 464 921.7 465 915 465 C908.3 465 907.7 464.7 905 460 C902.3 455.3 900.3 450.2 905 447.5Z M1100 370 C1106.7 364.7 1117 364.8 1125 367.5 C1133 370.2 1132.7 373.3 1130 380 C1127.3 386.7 1123 390.5 1115 392.5 C1107 394.5 1104 393.5 1100 387.5 C1096 381.5 1093.3 375.3 1100 370Z M1095 397.5 C1099.7 393.5 1111 395.3 1115 400 C1119 404.7 1114.7 411 1110 415 C1105.3 419 1101.5 419.7 1097.5 415 C1093.5 410.3 1090.3 401.5 1095 397.5Z M1180 385 C1184.7 379 1194.7 376.7 1200 380 C1205.3 383.3 1204.7 391.5 1200 397.5 C1195.3 403.5 1187.8 405.8 1182.5 402.5 C1177.2 399.2 1175.3 391 1180 385Z M900 567.5 C905.3 562.8 911.3 570.5 920 572.5 C928.7 574.5 929.8 570.3 932.5 575 C935.2 579.7 938.7 586 930 590 C921.3 594 908 596 900 590 C892 584 894.7 572.2 900 567.5Z M900 365 C904 361 911.7 361.7 915 365 C918.3 368.3 916.5 373.5 912.5 377.5 C908.5 381.5 903.3 383.3 900 380 C896.7 376.7 896 369 900 365Z M927.5 380 C930.8 378 937.3 379.2 940 382.5 C942.7 385.8 940.8 390.5 937.5 392.5 C934.2 394.5 930.2 393.3 927.5 390 C924.8 386.7 924.2 382 927.5 380Z M1171.2 470 C1173 467.7 1176.8 467.7 1178.8 470 C1180.8 472.3 1180.6 476.5 1178.8 478.8 C1177 481.1 1174 481.1 1172 478.8 C1170 476.5 1169.4 472.3 1171.2 470Z M442.5 662.5 C446.5 657.2 450.8 654.3 457.5 655 C464.2 655.7 460.2 661 467.5 665 C474.8 669 476.3 667.3 485 670 C493.7 672.7 495.3 670.3 500 675 C504.7 679.7 505.8 683.5 502.5 687.5 C499.2 691.5 496.2 690.7 487.5 690 C478.8 689.3 478.7 688.3 470 685 C461.3 681.7 462.3 680.2 455 677.5 C447.7 674.8 445.8 679 442.5 675 C439.2 671 438.5 667.8 442.5 662.5Z M600 697.5 C604.7 692.8 607.7 690 615 690 C622.3 690 624.8 692.2 627.5 697.5 C630.2 702.8 630.3 705.3 625 710 C619.7 714.7 614.8 715.7 607.5 715 C600.2 714.3 599.5 712.2 597.5 707.5 C595.5 702.8 595.3 702.2 600 697.5Z M372.5 761.2 C373.5 757.9 376.5 757.3 378.8 760 C381.1 762.7 382.2 767.9 381.2 771.2 C380.2 774.5 377.3 775.2 375 772.5 C372.7 769.8 371.5 764.5 372.5 761.2Z M525 725 C527 721.7 531.7 718.7 535 720 C538.3 721.3 539.5 726.7 537.5 730 C535.5 733.3 530.8 733.8 527.5 732.5 C524.2 731.2 523 728.3 525 725Z M747.5 615 C751.5 611.7 754.7 610.5 760 612.5 C765.3 614.5 766.2 616.5 767.5 622.5 C768.8 628.5 768.3 633 765 635 C761.7 637 760.3 632.7 755 630 C749.7 627.3 747 629 745 625 C743 621 743.5 618.3 747.5 615Z M680 590 C688 587.3 698.8 586 707.5 590 C716.2 594 714.5 598.3 712.5 605 C710.5 611.7 708 613 700 615 C692 617 688.5 616.5 682.5 612.5 C676.5 608.5 678.2 606 677.5 600 C676.8 594 672 592.7 680 590Z M762.5 600 C769.2 596.7 777.7 594.8 785 597.5 C792.3 600.2 792.7 605.3 790 610 C787.3 614.7 783 615 775 615 C767 615 763.3 614 760 610 C756.7 606 755.8 603.3 762.5 600Z M830 595 C836.7 591 834.7 591.3 850 590 C865.3 588.7 873.5 587.3 887.5 590 C901.5 592.7 901.8 594 902.5 600 C903.2 606 898.7 610.5 890 612.5 C881.3 614.5 879.3 606.2 870 607.5 C860.7 608.8 863 615.5 855 617.5 C847 619.5 848 618.3 840 615 C832 611.7 827.7 610.3 825 605 C822.3 599.7 823.3 599 830 595Z M650 652.5 C652.7 646.5 657.7 647.2 660 652.5 C662.3 657.8 661.5 666.5 658.8 672.5 C656.1 678.5 652.3 680.3 650 675 C647.7 669.7 647.3 658.5 650 652.5Z M900 590 C906.7 586 921 587.3 925 590 C929 592.7 921.7 596 915 600 C908.3 604 904 607.7 900 605 C896 602.3 893.3 594 900 590Z M512.5 828 C514.4 825.9 517.9 825.6 520 827.5 C522.1 829.4 522.4 832.9 520.5 835 C518.6 837.1 515.1 837.4 513 835.5 C510.9 833.6 510.6 830.1 512.5 828Z M590 178.3 C593.8 175.4 600.3 174.5 605 175.8 C609.7 177.1 609.7 179.5 607.5 183.3 C605.3 187.1 601.2 189.1 596.7 190 C592.2 190.9 592.6 189.8 590.8 186.7 C589 183.6 586.2 181.2 590 178.3Z M636.7 202.5 C638.9 199.8 643.1 199.5 645.8 201.7 C648.5 203.9 648.9 208.1 646.7 210.8 C644.5 213.5 640.2 213.9 637.5 211.7 C634.8 209.5 634.5 205.2 636.7 202.5Z M731.7 208.3 C736.2 204.1 740.5 204.6 746.7 204.2 C752.9 203.8 753.2 201.6 755 206.7 C756.8 211.8 757.3 218.4 753.3 223.3 C749.3 228.2 746.2 225.9 740 225 C733.8 224.1 732.2 224.5 730 220 C727.8 215.5 727.2 212.5 731.7 208.3Z"/>
<path fill="#a4cdfe" d="M355 142.5 C355 142.5 380.5 140 387.5 142.5 C394.5 145 389.3 150 390 155 C390.7 160 390 162 391.2 167.5 C392.4 173 395.4 178.5 396.2 182.5 C397 186.5 398.2 186.8 395 187.5 C391.8 188.2 385.5 186.9 380 186.2 C374.5 185.5 371 183 367.5 183.8 C364 184.6 365 188.8 362.5 190 C360 191.2 355 190 355 190 L355 142.5Z M355 321.2 C356.2 318.2 359.6 322.7 361.2 325 C362.8 327.3 363.3 330 363 332.5 C362.7 335 361.1 336 359.5 337.5 C357.9 339 355.9 343.3 355 340 C354.1 336.7 353.8 324.2 355 321.2Z M355 348.8 C356 346.8 359.1 351.8 360 355 C360.9 358.2 360.5 363 359.5 365 C358.5 367 355.9 368.2 355 365 C354.1 361.8 354 350.8 355 348.8Z M879.5 345.5 C881.1 343.1 884.1 340.2 890 335.5 C895.9 330.8 904.6 324.2 908.8 322 C913 319.8 913.8 321.1 910.8 324.5 C907.8 327.9 899.6 334.2 893.8 338.8 C888 343.4 884.9 346.2 882 347.5 C879.1 348.8 877.9 347.9 879.5 345.5Z M760 190 C760.9 188.8 764.2 188.5 765.5 189.5 C766.8 190.5 767.4 193.8 766.5 195 C765.6 196.2 762.3 196.5 761 195.5 C759.7 194.5 759.1 191.2 760 190Z M1012.5 266.2 C1013.7 265 1016.5 263.7 1020 265 C1023.5 266.3 1025.5 269.7 1030 272.5 C1034.5 275.3 1037 276.5 1042.5 278.8 C1048 281.1 1054.8 281.8 1057.5 283.8 C1060.2 285.8 1058.7 288.1 1056.2 288.8 C1053.7 289.5 1049.7 289 1045 287.5 C1040.3 286 1037.5 283.7 1032.5 281.2 C1027.5 278.7 1023.7 277 1020 275 C1016.3 273 1015.3 273 1013.8 271.2 C1012.3 269.4 1011.3 267.4 1012.5 266.2Z M987.5 303.8 C988 303.3 992 304.7 995 306.2 C998 307.7 1001.5 309.9 1002.5 311.2 C1003.5 312.5 1002 313 1000 312.5 C998 312 995 310.5 992.5 308.8 C990 307.1 987 304.3 987.5 303.8Z M975 326.2 C976 325.5 982.2 326.2 985 327.5 C987.8 328.8 989.8 331.8 988.8 332.5 C987.8 333.2 982.8 332.5 980 331.2 C977.2 329.9 974 326.9 975 326.2Z M1139.5 240 C1140 238.5 1141.8 238.5 1142.5 240 C1143.2 241.5 1143.5 246 1143 247.5 C1142.5 249 1140.7 249 1140 247.5 C1139.3 246 1139 241.5 1139.5 240Z M1150.8 247.5 C1151.3 245.5 1153.1 245.5 1153.8 247.5 C1154.5 249.5 1154.7 255.5 1154.2 257.5 C1153.7 259.5 1151.9 259.5 1151.2 257.5 C1150.5 255.5 1150.3 249.5 1150.8 247.5Z M355 365 C355 365 364.8 363 368.8 365 C372.8 367 372.3 370.5 375 375 C377.7 379.5 379 383.5 382.5 387.5 C386 391.5 387.5 392.5 392.5 395 C397.5 397.5 403.2 398.2 407.5 400 C411.8 401.8 412.1 401.3 413.8 403.8 C415.5 406.3 416.5 410.3 416.2 412.5 C415.9 414.7 412.2 413 412.5 415 C412.8 417 416.5 419.5 417.5 422.5 C418.5 425.5 418.5 427.5 417.5 430 C416.5 432.5 414.2 433 412.5 435 C410.8 437 408.8 437.5 408.8 440 C408.8 442.5 410.5 445.3 412.5 447.5 C414.5 449.7 416.8 449.2 418.8 451.2 C420.8 453.2 420.3 454.7 422.5 457.5 C424.7 460.3 427 461.5 430 465 C433 468.5 435 471 437.5 475 C440 479 440.9 481.2 442.5 485 C444.1 488.8 445.4 492 445.5 493.8 C445.6 495.6 444.1 494.6 443 493.8 C441.9 493 442.1 493.3 440 490 C437.9 486.7 435.5 482 432.5 477.5 C429.5 473 428 471 425 467.5 C422 464 419.5 460.5 417.5 460 C415.5 459.5 415.7 461.5 415 465 C414.3 468.5 414.3 471.5 413.8 477.5 C413.3 483.5 413 487.5 412.5 495 C412 502.5 411.7 509 411.2 515 C410.7 521 409.2 523 410 525 C410.8 527 413 524.5 415 525 C417 525.5 419.5 526 420 527.5 C420.5 529 419.3 531.8 417.5 532.5 C415.7 533.2 412.9 528.7 411.2 531.2 C409.5 533.7 409.8 538.2 408.8 545 C407.8 551.8 407.2 558 406.2 565 C405.2 572 404.8 575 403.8 580 C402.8 585 401.2 590 401.2 590 L355 590 L355 365Z M850 390 C851.2 387 856 383 860 380 C864 377 865 375.8 870 375 C875 374.2 881 375.2 885 376.2 C889 377.2 890 378.5 890 380 C890 381.5 888.5 383.6 885 383.8 C881.5 384 877 380.7 872.5 381.2 C868 381.7 866.2 383.4 862.5 386.2 C858.8 389 856.3 394.2 853.8 395 C851.3 395.8 848.8 393 850 390Z M828 432.5 C828.4 430.5 829.9 430.5 830.5 432.5 C831.1 434.5 831.4 440.5 831 442.5 C830.6 444.5 829.1 444.5 828.5 442.5 C827.9 440.5 827.6 434.5 828 432.5Z M967.5 590 C967.5 590 968 582 970 577.5 C972 573 973.5 571.2 977.5 567.5 C981.5 563.8 984.5 561.8 990 558.8 C995.5 555.8 1000.5 554 1005 552.5 C1009.5 551 1008.5 550.7 1012.5 551.2 C1016.5 551.7 1019.5 552.7 1025 555 C1030.5 557.3 1034 559.5 1040 562.5 C1046 565.5 1049 567 1055 570 C1061 573 1064.5 574.5 1070 577.5 C1075.5 580.5 1079 582.5 1082.5 585 C1086 587.5 1087.5 590 1087.5 590 L967.5 590Z M1120 430 C1122 428.5 1123.8 429.5 1123.8 432.5 C1123.8 435.5 1121.8 440 1120 445 C1118.2 450 1117 454 1115 457.5 C1113 461 1111.8 462 1110 462.5 C1108.2 463 1106.4 462.5 1106.2 460 C1106 457.5 1107.3 454 1108.8 450 C1110.3 446 1111.6 444 1113.8 440 C1116 436 1118 431.5 1120 430Z M993 412.5 C994 410.8 995.5 411.3 995.5 413.8 C995.5 416.3 994.1 421.3 993 425 C991.9 428.7 991 431.3 990 432.5 C989 433.7 987.9 433.2 988 431.2 C988.1 429.2 989.5 426.2 990.5 422.5 C991.5 418.8 992 414.2 993 412.5Z M1032 402.5 C1032.9 400.5 1034.4 401.3 1034.5 403.8 C1034.6 406.3 1033.4 410.8 1032.5 415 C1031.6 419.2 1030.9 423.2 1030 425 C1029.1 426.8 1028 426 1028 423.8 C1028 421.6 1029.2 418.1 1030 413.8 C1030.8 409.5 1031.1 404.5 1032 402.5Z M1075 435 C1075.5 433.2 1077.3 433.5 1078 435.5 C1078.7 437.5 1079 443.2 1078.5 445 C1078 446.8 1076.2 446.5 1075.5 444.5 C1074.8 442.5 1074.5 436.8 1075 435Z M355 590 L401.2 590 C401.2 590 399.2 597.5 397.5 602.5 C395.8 607.5 394.5 611 392.5 615 C390.5 619 390.5 618.7 387.5 622.5 C384.5 626.3 381.5 630.5 377.5 633.8 C373.5 637.1 371 637.6 367.5 638.8 C364 640 362.5 639.5 360 640 C357.5 640.5 355 641.2 355 641.2 L355 590Z M650 776.2 C651.5 766.7 654 770.7 657.5 767.5 C661 764.3 664.8 763.5 667.5 760 C670.2 756.5 670.7 754.5 671.2 750 C671.7 745.5 669.5 742.5 670 737.5 C670.5 732.5 673.8 729 673.8 725 C673.8 721 671.8 721 670 717.5 C668.2 714 666.8 712 665 707.5 C663.2 703 662.2 700.5 661.2 695 C660.2 689.5 660 686 660 680 C660 674 660.2 670 661.2 665 C662.2 660 662.2 659 665 655 C667.8 651 670.5 648.5 675 645 C679.5 641.5 682 640.3 687.5 637.5 C693 634.7 697.5 634.2 702.5 631.2 C707.5 628.2 708.5 625 712.5 622.5 C716.5 620 718.5 618.3 722.5 618.8 C726.5 619.3 728 623.3 732.5 625 C737 626.7 740.5 626.7 745 627.5 C749.5 628.3 752 627.5 755 628.8 C758 630.1 757.5 632.6 760 633.8 C762.5 635 764 635 767.5 635 C771 635 773 632.8 777.5 633.8 C782 634.8 785.5 638 790 640 C794.5 642 796 642 800 643.8 C804 645.6 806 646.6 810 648.8 C814 651 816 652.8 820 655 C824 657.2 825.5 659.2 830 660 C834.5 660.8 838.5 657.8 842.5 658.8 C846.5 659.8 849 665.3 850 665 C851 664.7 846 659.5 847.5 657.5 C849 655.5 853 656 857.5 655 C862 654 866 654.5 870 652.5 C874 650.5 874.5 648.5 877.5 645 C880.5 641.5 882 638.5 885 635 C888 631.5 889.5 630.3 892.5 627.5 C895.5 624.7 896.5 623.7 900 621.2 C903.5 618.7 905.5 617.2 910 615 C914.5 612.8 917 612.5 922.5 610 C928 607.5 932 605 937.5 602.5 C943 600 950 597.5 950 597.5 L950 815 L650 815 C650 815 648.5 785.7 650 776.2Z M713.8 619.2 C715.8 617.9 722.5 617.2 725 618 C727.5 618.8 728.2 621.7 726.2 623 C724.2 624.3 717.5 625.3 715 624.5 C712.5 623.7 711.8 620.5 713.8 619.2Z M950 600 C950 600 959 594.5 962.5 592.5 C966 590.5 967.5 590 967.5 590 L1087.5 590 C1087.5 590 1089 595 1090 600 C1091 605 1091 609 1092.5 615 C1094 621 1095.5 624.5 1097.5 630 C1099.5 635.5 1100.5 637.5 1102.5 642.5 C1104.5 647.5 1106.8 650 1107.5 655 C1108.2 660 1106.7 664 1106.2 667.5 C1105.7 671 1103.7 672 1105 672.5 C1106.3 673 1109.5 669.3 1112.5 670 C1115.5 670.7 1118.3 673.2 1120 676.2 C1121.7 679.2 1118.7 682.2 1121.2 685 C1123.7 687.8 1128.7 687.5 1132.5 690 C1136.3 692.5 1137 694 1140 697.5 C1143 701 1144 704 1147.5 707.5 C1151 711 1153.5 712.5 1157.5 715 C1161.5 717.5 1164 717 1167.5 720 C1171 723 1172 726 1175 730 C1178 734 1179 736.8 1182.5 740 C1186 743.2 1189 744.2 1192.5 746.2 C1196 748.2 1200 750 1200 750 L1200 815 L950 815 L950 600Z M1185.8 696.2 C1186.9 694.8 1190.5 694.9 1191.8 696.2 C1193.1 697.5 1193.6 701.1 1192.5 702.5 C1191.4 703.9 1187.5 704.3 1186.2 703 C1184.9 701.7 1184.7 697.6 1185.8 696.2Z M650 900 L490 900 C490 900 494.5 894 497.5 890 C500.5 886 502.5 884 505 880 C507.5 876 507.5 874 510 870 C512.5 866 514.5 863 517.5 860 C520.5 857 522.5 857.5 525 855 C527.5 852.5 530 849.5 530 847.5 C530 845.5 524.5 847 525 845 C525.5 843 528.5 841 532.5 837.5 C536.5 834 540 831 545 827.5 C550 824 551.5 822.5 557.5 820 C563.5 817.5 567.5 817.5 575 815 C582.5 812.5 587.8 810.5 595 807.5 C602.2 804.5 605.2 803 611.2 800 C617.2 797 619.7 796 625 792.5 C630.3 789 632.5 786 637.5 782.5 C642.5 779 650 775 650 775 L650 900Z M640 780 L1210 780 L1210 910 L640 910 L640 780Z M760.8 189.2 C761.5 188.2 763.9 188.3 764.7 189.5 C765.5 190.7 765.7 194 765 195 C764.3 196 762 195.9 761.2 194.7 C760.4 193.5 760.1 190.2 760.8 189.2Z"/>
<path fill="#f7f5ef" d="M398.8 415 C399.6 414 401.6 414 403.8 416.2 C406 418.4 409 423.2 410 426.2 C411 429.2 410 430.9 408.8 431.2 C407.6 431.5 405.6 429.5 403.8 427.5 C402 425.5 401 423.7 400 421.2 C399 418.7 398 416 398.8 415Z M381.2 390 C381.2 389.3 385.1 388.9 387.5 389.5 C389.9 390.1 393 392.3 393 393 C393 393.7 389.9 393.6 387.5 393 C385.1 392.4 381.2 390.7 381.2 390Z M1036.2 667.5 C1037.7 665.2 1040.8 664.2 1042.5 666.2 C1044.2 668.2 1044.2 672.2 1044.5 677.5 C1044.8 682.8 1043.2 687.5 1043.8 692.5 C1044.4 697.5 1046.7 697 1047.5 702.5 C1048.3 708 1048.3 713.5 1048 720 C1047.7 726.5 1047.8 729 1046.2 735 C1044.6 741 1041.7 744 1040 750 C1038.3 756 1038.3 759 1037.5 765 C1036.7 771 1037.7 774.5 1036.2 780 C1034.7 785.5 1032 789 1030 792.5 C1028 796 1028.2 798 1026.2 797.5 C1024.2 797 1023.2 792.5 1020 790 C1016.8 787.5 1013.2 787 1010 785 C1006.8 783 1004.6 783 1003.8 780 C1003 777 1007.5 773 1006.2 770 C1004.9 767 998.7 768 997.5 765 C996.3 762 1001 758 1000 755 C999 752 993.3 753 992.5 750 C991.7 747 996.7 743.5 996.2 740 C995.7 736.5 990.5 735.5 990 732.5 C989.5 729.5 994 728 993.8 725 C993.6 722 988.6 720.5 988.8 717.5 C989 714.5 992.8 713 995 710 C997.2 707 997.5 705 1000 702.5 C1002.5 700 1004 699.8 1007.5 697.5 C1011 695.2 1013 692.9 1017.5 691.2 C1022 689.5 1026.5 689 1030 688.8 C1033.5 688.6 1034 692.3 1035 690 C1036 687.7 1034.8 682 1035 677.5 C1035.2 673 1034.7 669.8 1036.2 667.5Z M1080.5 683.8 C1082 682.8 1086.6 684 1090 683 C1093.4 682 1095.5 678.9 1097.5 678.8 C1099.5 678.7 1100 680.5 1100 682.5 C1100 684.5 1099.5 687.8 1097.5 688.8 C1095.5 689.8 1093 687.7 1090 687.5 C1087 687.3 1084.4 688.7 1082.5 688 C1080.6 687.3 1079 684.8 1080.5 683.8Z M1061.5 663 C1061.5 662.1 1062.9 660.8 1063.8 660.8 C1064.7 660.8 1066 662.1 1066 663 C1066 663.9 1064.7 665.2 1063.8 665.2 C1062.9 665.2 1061.5 663.9 1061.5 663Z M1140.5 714.2 C1140.5 713.2 1142 711.8 1143 711.8 C1144 711.8 1145.5 713.2 1145.5 714.2 C1145.5 715.2 1144 716.8 1143 716.8 C1142 716.8 1140.5 715.2 1140.5 714.2Z M1126 718 C1126 717.4 1126.9 716.5 1127.5 716.5 C1128.1 716.5 1129 717.4 1129 718 C1129 718.6 1128.1 719.5 1127.5 719.5 C1126.9 719.5 1126 718.6 1126 718Z M1091 720 C1091 719.4 1091.9 718.5 1092.5 718.5 C1093.1 718.5 1094 719.4 1094 720 C1094 720.6 1093.1 721.5 1092.5 721.5 C1091.9 721.5 1091 720.6 1091 720Z M1077.5 700 C1077.5 699.5 1078.3 698.8 1078.8 698.8 C1079.3 698.8 1080 699.5 1080 700 C1080 700.5 1079.3 701.2 1078.8 701.2 C1078.3 701.2 1077.5 700.5 1077.5 700Z M1023.8 815 C1020 813.8 1024.5 810.3 1026.2 808.8 C1027.9 807.3 1030.2 807 1032.5 807.5 C1034.8 808 1035.2 810.7 1037.5 811.2 C1039.8 811.7 1042.3 809.2 1043.8 810 C1045.3 810.8 1049 814 1045 815 C1041 816 1027.6 816.2 1023.8 815Z M1025 808.8 C1027 807 1027.8 805.7 1030 806.2 C1032.2 806.7 1033.4 809.4 1036.2 811.2 C1039 813 1041 812.7 1043.8 815 C1046.6 817.3 1048.3 819 1050 822.5 C1051.7 826 1051 828 1052.5 832.5 C1054 837 1055.2 839.5 1057.5 845 C1059.8 850.5 1062.8 854.5 1063.8 860 C1064.8 865.5 1064.3 867.5 1062.5 872.5 C1060.7 877.5 1057.5 879 1055 885 C1052.5 891 1050 902.5 1050 902.5 L987.5 902.5 C987.5 902.5 984.5 893 982.5 887.5 C980.5 882 978 879.5 977.5 875 C977 870.5 982 868 980 865 C978 862 970.5 863 967.5 860 C964.5 857 965 854.5 965 850 C965 845.5 965.5 840.5 967.5 837.5 C969.5 834.5 972 834.5 975 835 C978 835.5 978.5 839.5 982.5 840 C986.5 840.5 990.5 839.5 995 837.5 C999.5 835.5 1001.5 833.5 1005 830 C1008.5 826.5 1009.5 823 1012.5 820 C1015.5 817 1017.5 817.2 1020 815 C1022.5 812.8 1023 810.6 1025 808.8Z M968 827.5 C968 826.1 969.8 823.1 971.2 821.2 C972.6 819.3 974.1 818 975 818 C975.9 818 976.6 819.2 975.8 821.2 C975 823.2 972.8 826.7 971.2 828 C969.6 829.3 968 828.9 968 827.5Z M1038.2 807 C1038.7 805.8 1041.2 804.9 1042.5 805.5 C1043.8 806.1 1045 808.8 1044.5 810 C1044 811.2 1041.3 812.1 1040 811.5 C1038.7 810.9 1037.7 808.2 1038.2 807Z"/>
<path fill="#cde2a9" d="M1036.2 668.8 C1037.4 666.8 1039.9 665.8 1041.2 667.5 C1042.5 669.2 1042.5 672.5 1042.5 677.5 C1042.5 682.5 1040.9 687.5 1041.2 692.5 C1041.5 697.5 1043.4 697 1043.8 702.5 C1044.2 708 1043.5 713.5 1043 720 C1042.5 726.5 1042.6 729 1041.2 735 C1039.8 741 1037.7 744 1036.2 750 C1034.7 756 1034.5 759 1033.8 765 C1033.1 771 1033.8 774.8 1032.5 780 C1031.2 785.2 1030 789.4 1027.5 791.2 C1025 793 1023.5 790.3 1020 788.8 C1016.5 787.3 1013.1 785.7 1010 783.8 C1006.9 781.9 1005.1 782.3 1004.5 779.5 C1003.9 776.7 1008.2 773 1007 770 C1005.8 767 999.7 767.5 998.5 764.5 C997.3 761.5 1002 758 1001 755 C1000 752 994.3 752.5 993.5 749.5 C992.7 746.5 997.5 743.4 997 740 C996.5 736.6 991.5 735.5 991 732.5 C990.5 729.5 994.7 728 994.5 725 C994.3 722 989.7 720.4 990 717.5 C990.3 714.6 993.7 713.4 995.8 710.5 C997.9 707.6 998.1 705.5 1000.5 703 C1002.9 700.5 1004.6 700.4 1008 698.2 C1011.4 696 1013.1 693.7 1017.5 692 C1021.9 690.3 1026.5 689.7 1030 689.5 C1033.5 689.3 1034 693.2 1035 690.8 C1036 688.4 1034.8 681.9 1035 677.5 C1035.2 673.1 1035 670.8 1036.2 668.8Z M1081 684.2 C1082.3 683.5 1087.2 683.2 1089.5 683.8 C1091.8 684.4 1093.8 686.3 1092.5 687 C1091.2 687.7 1085.3 688.1 1083 687.5 C1080.7 686.9 1079.7 684.9 1081 684.2Z"/>
<path fill="none" stroke="#f9c97f" stroke-width="1.5" stroke-linecap="round" d="M977.5 840 C980.2 842 981.5 843.5 987.5 847.5 C993.5 851.5 993.3 853.3 1000 855 C1006.7 856.7 1004.5 857.1 1012.5 853.8 C1020.5 850.5 1021.3 847.5 1030 842.5 C1038.7 837.5 1041 837 1045 835 M1000 855 C1000.7 860.3 1001.2 863 1002.5 875 C1003.8 887 1004.3 893.3 1005 900 M1045 835 C1047.7 838.3 1051.7 840.2 1055 847.5 C1058.3 854.8 1059.5 855.2 1057.5 862.5 C1055.5 869.8 1054.8 869.7 1047.5 875 C1040.2 880.3 1038 878.5 1030 882.5 C1022 886.5 1020.8 888 1017.5 890 M977.5 840 C976.8 844 974.3 848.3 975 855 C975.7 861.7 978.7 862.3 980 865"/>
<path fill="none" stroke="#fbdcae" stroke-width="2" stroke-linecap="round" stroke-linejoin="round" d="M389.5 312 C395.6 314.1 401 314.5 412.5 320 C424 325.5 421.2 326.5 432.5 332.5 C443.8 338.5 446.3 335.8 455 342.5 C463.7 349.2 461.7 351.5 465 357.5 C468.3 363.5 466.8 363 467.5 365 M382.5 233.2 C382.2 238.3 381.2 241.4 381.2 252.5 C381.2 263.6 381.5 263.7 382.5 275 C383.5 286.3 383.1 285.1 385 295 C386.9 304.9 388.3 307.5 389.5 312 M382.5 233.2 C377.8 234.3 372.3 235.7 365 237.5 C357.7 239.3 357.7 239.3 355 240 M382.5 233.2 C378.5 230.3 374.8 226 367.5 222.5 C360.2 219 358.3 220.7 355 220 M382.5 233.2 C379.2 238.3 375.3 242.7 370 252.5 C364.7 262.3 364.5 265.3 362.5 270 M382.5 233.2 C387.2 237 390 240.4 400 247.5 C410 254.6 410 253.3 420 260 C430 266.7 427.5 265.5 437.5 272.5 C447.5 279.5 452.2 282.5 457.5 286.2 M552.5 145 C552.5 149 551.2 152 552.5 160 C553.8 168 551.5 169.7 557.5 175 C563.5 180.3 563.7 179.3 575 180 C586.3 180.7 593.3 178.2 600 177.5 M425 217.5 C427 220.8 425.8 224.3 432.5 230 C439.2 235.7 445.3 236.5 450 238.8 M442.5 147.5 C437.8 148.2 434.3 148 425 150 C415.7 152 412.2 153.7 407.5 155 M562.5 182.5 C564.5 186.5 564.7 188.8 570 197.5 C575.3 206.2 579.2 210.3 582.5 215 M610 320 C614 321.3 614.3 325 625 325 C635.7 325 643.3 321.3 650 320 M389.5 312 C385.6 315.5 381.5 317.5 375 325 C368.5 332.5 367.7 336 365 340 M357.5 287.5 C360.8 290.8 361.5 293.5 370 300 C378.5 306.5 384.3 308.8 389.5 312 M737.5 177.5 C744.2 178.2 749.2 177.7 762.5 180 C775.8 182.3 774.2 185.5 787.5 186.2 C800.8 186.9 800.8 182.8 812.5 182.5 C824.2 182.2 826.2 184.3 831.2 185 M847.5 275 C852.2 273.7 857.7 271.3 865 270 C872.3 268.7 872.3 270 875 270 M792.5 255 C797.8 256.3 801.2 256.7 812.5 260 C823.8 263.3 825.7 263.5 835 267.5 C844.3 271.5 845.5 269 847.5 275 C849.5 281 844.5 283.3 842.5 290 C840.5 296.7 840.7 297.3 840 300 M850 190 C851.3 195.3 849.7 200 855 210 C860.3 220 864.7 217.5 870 227.5 C875.3 237.5 873.7 242.2 875 247.5 M735 352.5 C739 353.8 741.3 356.8 750 357.5 C758.7 358.2 762.8 355.7 767.5 355 M737.5 155 C740.8 159 745.3 163.3 750 170 C754.7 176.7 753.7 177.3 755 180 M775 190 C777.7 193.3 782 193.8 785 202.5 C788 211.2 786.2 211.2 786.2 222.5 C786.2 233.8 785.3 239 785 245 M650 315 L657.5 320 M840 310 C844.7 312.7 849.5 318.7 857.5 320 C865.5 321.3 866.7 316.3 870 315 M915 315 C913.7 311.7 908.7 307.8 910 302.5 C911.3 297.2 914 295.7 920 295 C926 294.3 929.2 298.7 932.5 300 M1120 177.5 C1121.3 182.2 1123 186.1 1125 195 C1127 203.9 1126.8 206.6 1127.5 210.8 M1127.5 210.8 C1126.8 214.6 1126 217.9 1125 225 C1124 232.1 1124.1 234.2 1123.8 237.5 M1117.5 312.5 L1100 320 M1026.8 174.2 C1030.3 173.1 1031.1 170.5 1040 170 C1048.9 169.5 1054.7 171.8 1060 172.5 M1026.8 174.2 C1027.7 170.4 1026.5 167.1 1030 160 C1033.5 152.9 1037.3 150.8 1040 147.5 M980 153 L985 145 M1012.5 190 C1015.8 194 1023.7 198.3 1025 205 C1026.3 211.7 1019.5 212.3 1017.5 215 M1187.5 145 C1189.5 147.7 1191.7 151 1195 155 C1198.3 159 1198.7 158.7 1200 160 M957.5 205 C961.5 209.7 965.8 213.8 972.5 222.5 C979.2 231.2 979.8 233.5 982.5 237.5 M500 365 C502.7 367.7 503.3 369.7 510 375 C516.7 380.3 518.3 379 525 385 C531.7 391 529.7 391.5 535 397.5 C540.3 403.5 542.3 404.8 545 407.5 M435 530 L420 532.5 M492.5 372.5 C492.5 377.2 492.2 378.7 492.5 390 C492.8 401.3 493.5 401.7 493.8 415 C494.1 428.3 493.8 433.3 493.8 440 M443.8 442.5 C449.5 443.2 452.7 444.3 465 445 C477.3 445.7 483.3 445 490 445 M545 407.5 C549.7 405.5 551.2 402.7 562.5 400 C573.8 397.3 574.2 399.5 587.5 397.5 C600.8 395.5 599.2 395.8 612.5 392.5 C625.8 389.2 627.5 389 637.5 385 C647.5 381 646.7 379.5 650 377.5 M512.5 515 C514.5 520.3 516.7 525 520 535 C523.3 545 523.7 547.8 525 552.5 M632.5 555 C629.8 560.3 627.2 565.7 622.5 575 C617.8 584.3 617 586 615 590 M412.5 365 C409.2 366.3 406.7 369.3 400 370 C393.3 370.7 390.8 368.2 387.5 367.5 M821.2 486.8 C820.9 491.7 819.7 494.8 820 505 C820.3 515.2 819.8 514.3 822.5 525 C825.2 535.7 826.7 534.3 830 545 C833.3 555.7 833 553 835 565 C837 577 836.8 583.3 837.5 590 M650 365 C656.7 367 661.7 369.2 675 372.5 C688.3 375.8 686.7 376.8 700 377.5 C713.3 378.2 711.7 374.3 725 375 C738.3 375.7 737.3 377.3 750 380 C762.7 382.7 766.5 383.7 772.5 385 M680 402.5 C685.3 401.8 690.7 398.7 700 400 C709.3 401.3 711 405.5 715 407.5 M937.5 552.5 L950 555 M1170 510 C1174 512 1177 514.2 1185 517.5 C1193 520.8 1196 521.2 1200 522.5 M1040 475 C1045.3 477.7 1052 479 1060 485 C1068 491 1067.3 494.2 1070 497.5 M1133.2 465 C1136.3 469 1137.9 473.3 1145 480 C1152.1 486.7 1152 486 1160 490 C1168 494 1171 493.7 1175 495 M1185.8 467.5 C1188.3 465.5 1191.2 462.7 1195 460 C1198.8 457.3 1198.7 458.2 1200 457.5 M515 780 C519 778.7 520.7 776.3 530 775 C539.3 773.7 540.7 776.3 550 775 C559.3 773.7 561 771.3 565 770 M382.5 690 C387.2 691.3 390 693 400 695 C410 697 414.7 696.8 420 697.5 M647.5 748.2 C644.8 751.3 643.5 754.2 637.5 760 C631.5 765.8 628.3 767.3 625 770 M475 737.5 C479 740.8 482.7 742.7 490 750 C497.3 757.3 495.8 757 502.5 765 C509.2 773 511.7 776 515 780 M430 775.5 C422 778.7 414.7 782.3 400 787.5 C385.3 792.7 386.3 791 375 795 C363.7 799 362.2 800.5 357.5 802.5 M515 780 L512.5 765 M615 615 L625 622.5 M360 677.5 L375 675 M525 612.5 L512.5 613.8 M647.5 748.2 L650 730 M660 650 L650 640 M430 775.5 C422 778.7 414.7 782.3 400 787.5 C385.3 792.7 386.3 791 375 795 C363.7 799 362.2 800.5 357.5 802.5 M580 198.3 C583.5 197 585.3 197.3 593.3 193.3 C601.3 189.3 605.5 186 610 183.3 M740 156.7 C743.5 161.1 747.1 166.2 753.3 173.3 C759.5 180.4 756.2 179.7 763.3 183.3 C770.4 186.9 775.5 185.8 780 186.7 M736.7 176.7 L753.3 176.7"/>
<path fill="none" stroke="#f9c97f" stroke-width="3.1" stroke-linecap="round" stroke-linejoin="round" d="M382.5 233.2 C392.5 234 402 234.7 420 236.2 C438 237.7 435.3 237.1 450 238.8 C464.7 240.5 463 242.5 475 242.5 C487 242.5 481.7 242.8 495 238.8 C508.3 234.8 510.3 233.2 525 227.5 C539.7 221.8 536.7 224.2 550 217.5 C563.3 210.8 561.7 209.8 575 202.5 C588.3 195.2 589.3 196.7 600 190 C610.7 183.3 609.3 183.8 615 177.5 C620.7 171.2 619.5 169.2 621.2 166.2 M510 142.5 C508.7 147.8 508.3 153.2 505 162.5 C501.7 171.8 500.8 170.2 497.5 177.5 C494.2 184.8 494.8 182.7 492.5 190 C490.2 197.3 489.5 196.3 488.8 205 C488.1 213.7 488.3 213.5 490 222.5 C491.7 231.5 493.7 234.5 495 238.8 M495 238.8 C491 241.8 487.3 243 480 250 C472.7 257 472.2 257 467.5 265 C462.8 273 465.2 274.3 462.5 280 C459.8 285.7 462.2 283.5 457.5 286.2 C452.8 288.9 453.7 288.3 445 290 C436.3 291.7 435.7 289.8 425 292.5 C414.3 295.2 414.5 294.8 405 300 C395.5 305.2 393.6 308.8 389.5 312 M500 240 C499.7 244 498.1 247 498.8 255 C499.5 263 498.8 264 502.5 270 C506.2 276 507.8 272.2 512.5 277.5 C517.2 282.8 517.3 284.9 520 290 C522.7 295.1 521.8 295 522.5 296.8 M457.5 286.2 C460.8 287.9 464 287.5 470 292.5 C476 297.5 474 301 480 305 C486 309 485.8 308.2 492.5 307.5 C499.2 306.8 497 304.5 505 302.5 C513 300.5 513.2 299.7 522.5 300 C531.8 300.3 529.3 302.5 540 303.8 C550.7 305.1 551.2 305.3 562.5 305 C573.8 304.7 572.5 301.8 582.5 302.5 C592.5 303.2 595.3 306.2 600 307.5 M522.5 296.8 C527.2 292.3 529.3 286.5 540 280 C550.7 273.5 551.8 277.8 562.5 272.5 C573.2 267.2 572.3 266 580 260 C587.7 254 588.2 252.7 591.2 250 M591.2 250 C590.9 246 589.7 244.3 590 235 C590.3 225.7 591.2 225 592.5 215 C593.8 205 592.3 205.5 595 197.5 C597.7 189.5 597.2 191 602.5 185 C607.8 179 611.7 177.7 615 175 M591.2 250 C591.5 255.3 590.2 260 592.5 270 C594.8 280 597.3 278.8 600 287.5 C602.7 296.2 599.8 293.8 602.5 302.5 C605.2 311.2 605.3 312.7 610 320 C614.7 327.3 616 322.7 620 330 C624 337.3 623 338.2 625 347.5 C627 356.8 626.8 360.3 627.5 365 M522.5 300 C521.8 304 522 305.7 520 315 C518 324.3 517.7 325 515 335 C512.3 345 514 344.5 510 352.5 C506 360.5 502.7 361.7 500 365 M389.5 312 C392.3 316.8 395.2 320.5 400 330 C404.8 339.5 404.2 338.2 407.5 347.5 C410.8 356.8 411.2 360.3 412.5 365 M450 292.5 C448 296.5 447.2 300.2 442.5 307.5 C437.8 314.8 438.5 312 432.5 320 C426.5 328 426.7 328.8 420 337.5 C413.3 346.2 414.8 345.8 407.5 352.5 C400.2 359.2 396.5 359.8 392.5 362.5 M382.5 233.2 C385.8 230.3 389.7 229.4 395 222.5 C400.3 215.6 400.8 216.2 402.5 207.5 C404.2 198.8 399.9 199.3 401.2 190 C402.5 180.7 402.5 181.2 407.5 172.5 C412.5 163.8 410.7 164.2 420 157.5 C429.3 150.8 436.5 150.2 442.5 147.5 M621.2 166.2 C623.5 172.5 625.7 178.3 630 190 C634.3 201.7 632.2 201.3 637.5 210 C642.8 218.7 646.7 219.2 650 222.5 M462.5 145 C464.5 149.7 465.3 153.2 470 162.5 C474.7 171.8 474 173.3 480 180 C486 186.7 489.2 185.5 492.5 187.5 M595 237.5 C599.7 236.2 602.5 233.5 612.5 232.5 C622.5 231.5 622.5 232.5 632.5 233.8 C642.5 235.1 645.3 236.5 650 237.5 M562.5 145 C565.8 147 566.3 149.2 575 152.5 C583.7 155.8 584.3 154.2 595 157.5 C605.7 160.8 609.7 163 615 165 M600 312.5 C597.3 315.8 595.3 317.7 590 325 C584.7 332.3 584.7 331.3 580 340 C575.3 348.7 575.2 350.8 572.5 357.5 C569.8 364.2 570.7 363 570 365 M640 240 C640.7 244 639.8 247 642.5 255 C645.2 263 648 266 650 270 M621.2 166.2 C625.5 165.2 629.8 162.8 637.5 162.5 C645.2 162.2 646.7 164.3 650 165 M650 165 C654 162.3 655 159.7 665 155 C675 150.3 687.5 147.5 687.5 147.5 L735 147.5 C735 147.5 755 147.8 775 147.5 C795 147.2 800.7 146.5 810 146.2 M735 147.5 C734.3 155.5 734.2 162.8 732.5 177.5 C730.8 192.2 730.8 191.2 728.8 202.5 C726.8 213.8 726 215.3 725 220 M650 197.5 C653.3 200.8 655.8 204 662.5 210 C669.2 216 665 217.7 675 220 C685 222.3 686.7 218.5 700 218.8 C713.3 219.1 711.7 218.9 725 221.2 C738.3 223.5 738 223.8 750 227.5 C762 231.2 760.7 230.3 770 235 C779.3 239.7 779 240.7 785 245 C791 249.3 790.5 249.5 792.5 251.2 M792.5 251.2 C797.2 249.5 801.3 251.3 810 245 C818.7 238.7 819.7 236.8 825 227.5 C830.3 218.2 828.3 221.3 830 210 C831.7 198.7 826.5 192.3 831.2 185 C835.9 177.7 843.8 187.8 847.5 182.5 C851.2 177.2 846 175 845 165 C844 155 844.1 150.3 843.8 145 M847.5 182.5 L862.5 187.5 M792.5 251.2 C791.5 256.2 790.1 259.7 788.8 270 C787.5 280.3 788.2 281.3 787.5 290 C786.8 298.7 788.2 295.8 786.2 302.5 C784.2 309.2 783.7 308.3 780 315 C776.3 321.7 775.8 320.8 772.5 327.5 C769.2 334.2 768.5 330 767.5 340 C766.5 350 768.5 358.3 768.8 365 M650 225 C654 228.3 658.3 238.8 665 237.5 C671.7 236.2 672.3 224.7 675 220 M650 240 C654 240 656.3 237.3 665 240 C673.7 242.7 673.2 244 682.5 250 C691.8 256 692 255.2 700 262.5 C708 269.8 705.8 270.8 712.5 277.5 C719.2 284.2 717 282.8 725 287.5 C733 292.2 735.8 290.3 742.5 295 C749.2 299.7 745.3 299.7 750 305 C754.7 310.3 755.3 309 760 315 C764.7 321 765.5 324.2 767.5 327.5 M752.5 306.2 C757.2 305.6 761 304.8 770 303.8 C779 302.8 781.9 302.8 786.2 302.5 M786.2 302.5 C789.9 305.8 795 309 800 315 C805 321 802.3 319 805 325 C807.7 331 809.3 330.2 810 337.5 C810.7 344.8 810.2 345.2 807.5 352.5 C804.8 359.8 802 361.7 800 365 M772.5 327.5 C777.2 327.2 782 328.2 790 326.2 C798 324.2 793.2 323.7 802.5 320 C811.8 316.3 813.7 317.8 825 312.5 C836.3 307.2 833.7 305.3 845 300 C856.3 294.7 856.8 296.5 867.5 292.5 C878.2 288.5 877.7 290.3 885 285 C892.3 279.7 887 277.8 895 272.5 C903 267.2 906.3 268.3 915 265 C923.7 261.7 924.2 261.3 927.5 260 M915 147.5 C912.3 149.5 907 149 905 155 C903 161 902.2 164.7 907.5 170 C912.8 175.3 916.3 173 925 175 C933.7 177 936 176.8 940 177.5 M940 177.5 C937.3 182.8 934.7 187.5 930 197.5 C925.3 207.5 925.5 205 922.5 215 C919.5 225 919.5 225 918.8 235 C918.1 245 917.7 243.2 920 252.5 C922.3 261.8 925.5 265.3 927.5 270 M650 280 C652 284 654.2 285.7 657.5 295 C660.8 304.3 659.2 304.3 662.5 315 C665.8 325.7 668.7 326.3 670 335 C671.3 343.7 668.2 344.2 667.5 347.5 M927.5 270 C930.2 275.3 932.2 282 937.5 290 C942.8 298 944.8 297.3 947.5 300 M915 315 C917.7 317.7 919 323.7 925 325 C931 326.3 930.8 323.3 937.5 320 C944.2 316.7 946.7 314.5 950 312.5 M915 315 C911 320.3 908 325.7 900 335 C892 344.3 893 342 885 350 C877 358 874 361 870 365 M922.5 332.5 C925.2 334.5 925.2 338 932.5 340 C939.8 342 945.3 340 950 340 M950 222.5 C948 227.2 945.8 230.7 942.5 240 C939.2 249.3 938.8 252.8 937.5 257.5 M980 153 C985.3 154.9 990.7 156.1 1000 160 C1009.3 163.9 1007.9 163.7 1015 167.5 C1022.1 171.3 1023.7 172.4 1026.8 174.2 M1026.8 174.2 C1030.3 176.4 1032.5 177.6 1040 182.5 C1047.5 187.4 1047 187.8 1055 192.5 C1063 197.2 1060.7 197.3 1070 200 C1079.3 202.7 1078.7 201.2 1090 202.5 C1101.3 203.8 1102.5 202.8 1112.5 205 C1122.5 207.2 1118.8 207.5 1127.5 210.8 C1136.2 214.1 1136.3 213.7 1145 217.5 C1153.7 221.3 1153.8 221.3 1160 225 C1166.2 228.7 1166 229.5 1168.2 231.2 M1085 145 C1085.3 150.3 1086.2 154.3 1086.2 165 C1086.2 175.7 1086.7 175.7 1085 185 C1083.3 194.3 1081.3 196 1080 200 M1080 200 C1080.7 206 1081.5 210.5 1082.5 222.5 C1083.5 234.5 1085.8 235 1083.8 245 C1081.8 255 1080.7 252.7 1075 260 C1069.3 267.3 1067.2 265.8 1062.5 272.5 C1057.8 279.2 1058.8 281.7 1057.5 285 M1083.8 245 C1085.5 249 1086.3 252.7 1090 260 C1093.7 267.3 1091.5 267.8 1097.5 272.5 C1103.5 277.2 1108.5 276.2 1112.5 277.5 M1083.8 245 C1088.1 243.7 1089 242 1100 240 C1111 238 1111.7 239.2 1125 237.5 C1138.3 235.8 1138.5 235.5 1150 233.8 C1161.5 232.1 1163.3 231.9 1168.2 231.2 M1026.8 174.2 C1023.7 177.1 1020.8 178.1 1015 185 C1009.2 191.9 1010.3 191.3 1005 200 C999.7 208.7 998.7 208.2 995 217.5 C991.3 226.8 991.9 226.3 991.2 235 C990.5 243.7 990.2 243.3 992.5 250 C994.8 256.7 994.7 256 1000 260 C1005.3 264 1009.2 263.7 1012.5 265 M980 153 C977.3 156.2 975.3 159.1 970 165 C964.7 170.9 965.3 169 960 175 C954.7 181 954.7 179.5 950 187.5 C945.3 195.5 945.2 195.7 942.5 205 C939.8 214.3 941.3 213.2 940 222.5 C938.7 231.8 939.5 230.7 937.5 240 C935.5 249.3 934.5 248.2 932.5 257.5 C930.5 266.8 930.7 270.3 930 275 M1168.2 231.2 C1170 234.9 1169.9 238 1175 245 C1180.1 252 1180.8 253.5 1187.5 257.5 C1194.2 261.5 1196.7 259.3 1200 260 M1168.2 231.2 C1166 234.9 1164.2 237.3 1160 245 C1155.8 252.7 1155.8 252 1152.5 260 C1149.2 268 1148.2 269.7 1147.5 275 C1146.8 280.3 1149.3 278.7 1150 280 M1168.2 231.2 C1172 228.2 1174 224.3 1182.5 220 C1191 215.7 1195.3 216.3 1200 215 M1168.2 231.2 C1168.7 225.5 1169.8 221 1170 210 C1170.2 199 1167.5 196.7 1168.8 190 C1170.1 183.3 1170 190.3 1175 185 C1180 179.7 1180.8 178 1187.5 170 C1194.2 162 1196.7 159 1200 155 M1150 145 C1152.7 150.3 1155.3 153.7 1160 165 C1164.7 176.3 1165.5 181.5 1167.5 187.5 M900 177.5 C905.3 177.5 909.3 177.5 920 177.5 C930.7 177.5 934.7 177.5 940 177.5 M900 152.5 C902 156.5 902.2 161.5 907.5 167.5 C912.8 173.5 916.7 173 920 175 M930 280 C933.3 282.7 933.8 286 942.5 290 C951.2 294 953.8 295 962.5 295 C971.2 295 968.2 289 975 290 C981.8 291 984.5 296.5 988 298.8 M988 298.8 C991.2 296.5 992.8 293.7 1000 290 C1007.2 286.3 1007 285 1015 285 C1023 285 1021.3 287.3 1030 290 C1038.7 292.7 1042.8 293.7 1047.5 295 M988 298.8 C986.5 303.1 986 306.7 982.5 315 C979 323.3 974.3 323.3 975 330 C975.7 336.7 980.3 334 985 340 C989.7 346 991.2 345.8 992.5 352.5 C993.8 359.2 990.7 361.7 990 365 M988 298.8 C992.5 301.8 995.1 304.3 1005 310 C1014.9 315.7 1014.3 315.3 1025 320 C1035.7 324.7 1039 322.2 1045 327.5 C1051 332.8 1048.2 333.3 1047.5 340 C1046.8 346.7 1043.8 349.2 1042.5 352.5 M942.5 290 C944.5 295.3 944 301.3 950 310 C956 318.7 958.3 317.2 965 322.5 C971.7 327.8 972.3 328 975 330 M900 300 C904 300.7 907 298.5 915 302.5 C923 306.5 927.3 307.7 930 315 C932.7 322.3 930.3 323.3 925 330 C919.7 336.7 916.7 334 910 340 C903.3 346 902.7 349.2 900 352.5 M930 315 L950 310 M900 275 C904 272.3 907.7 267.7 915 265 C922.3 262.3 924.2 265 927.5 265 M1117.5 312.5 C1122.8 310.5 1125.5 308.3 1137.5 305 C1149.5 301.7 1150.5 304 1162.5 300 C1174.5 296 1172.5 294.7 1182.5 290 C1192.5 285.3 1195.3 284.5 1200 282.5 M1155 312.5 C1157 317.2 1158.5 320 1162.5 330 C1166.5 340 1167.3 340.7 1170 350 C1172.7 359.3 1171.8 361 1172.5 365 M1047.5 295 C1048.2 300.3 1050.3 305.7 1050 315 C1049.7 324.3 1047.2 326 1046.2 330 M412.5 365 C414.5 367.7 413.3 370.3 420 375 C426.7 379.7 427.5 379.5 437.5 382.5 C447.5 385.5 447.5 386.9 457.5 386.2 C467.5 385.5 465.7 383.7 475 380 C484.3 376.3 485.8 376.5 492.5 372.5 C499.2 368.5 498 367 500 365 M457.5 386.2 C456.2 390.5 455.2 393.5 452.5 402.5 C449.8 411.5 449.8 410.7 447.5 420 C445.2 429.3 444.1 427.5 443.8 437.5 C443.5 447.5 444.5 447.5 446.2 457.5 C447.9 467.5 448 465 450 475 C452 485 454.5 484.1 453.8 495 C453.1 505.9 449.2 510.3 447.5 515.8 M414.5 403.8 C417.3 406.8 419.5 409.3 425 415 C430.5 420.7 430 419 435 425 C440 431 441.5 434.2 443.8 437.5 M570 365 C568.7 369.7 567 373.2 565 382.5 C563 391.8 563.5 391.3 562.5 400 C561.5 408.7 562.7 406.5 561.2 415 C559.7 423.5 558.1 427.3 557 431.8 M557 431.8 C559.1 435.3 561.2 436.8 565 445 C568.8 453.2 569.2 453.8 571.2 462.5 C573.2 471.2 572.8 470.2 572.5 477.5 C572.2 484.8 570.3 480 570 490 C569.7 500 570.5 501.7 571.2 515 C571.9 528.3 572.8 526.7 572.5 540 C572.2 553.3 572.7 553.7 570 565 C567.3 576.3 565.8 575.8 562.5 582.5 C559.2 589.2 558.8 588 557.5 590 M572.5 477.5 C577.2 476.2 581.3 475.8 590 472.5 C598.7 469.2 597 469.7 605 465 C613 460.3 612 459.7 620 455 C628 450.3 628.3 452.2 635 447.5 C641.7 442.8 641 442.2 645 437.5 C649 432.8 648.7 432 650 430 M447.5 515.8 C452.8 514.9 458.8 516.4 467.5 512.5 C476.2 508.6 471.3 504.5 480 501.2 C488.7 497.9 491.3 503 500 500 C508.7 497 504.5 493.3 512.5 490 C520.5 486.7 520 488.2 530 487.5 C540 486.8 539.3 487.5 550 487.5 C560.7 487.5 564.7 487.5 570 487.5 M447.5 515.8 C450.2 520.3 451.5 525.4 457.5 532.5 C463.5 539.6 462.7 538.5 470 542.5 C477.3 546.5 477.7 542.2 485 547.5 C492.3 552.8 490.2 557.2 497.5 562.5 C504.8 567.8 503.8 563.5 512.5 567.5 C521.2 571.5 520.7 573.5 530 577.5 C539.3 581.5 540.2 579.2 547.5 582.5 C554.8 585.8 554.8 588 557.5 590 M447.5 515.8 C444.2 519.6 439.7 520.9 435 530 C430.3 539.1 432.7 539.3 430 550 C427.3 560.7 428.3 559.3 425 570 C421.7 580.7 419.5 584.7 417.5 590 M470 542.5 C469.3 547.2 468.8 550.7 467.5 560 C466.2 569.3 467 569.5 465 577.5 C463 585.5 461.3 586.7 460 590 M557 431.8 C552.5 430.3 549.2 427.3 540 426.2 C530.8 425.1 531.8 424.5 522.5 427.5 C513.2 430.5 513.7 432.2 505 437.5 C496.3 442.8 498 441.5 490 447.5 C482 453.5 481.7 452 475 460 C468.3 468 469.7 468.2 465 477.5 C460.3 486.8 459.5 490.3 457.5 495 M625 365 C629 369 633.3 374.7 640 380 C646.7 385.3 647.3 383.7 650 385 M650 430 C654.1 430.7 655.5 432.8 665.5 432.5 C675.5 432.2 675 429.8 687.5 428.8 C700 427.8 700.5 429.1 712.5 428.8 C724.5 428.5 722.5 427.2 732.5 427.5 C742.5 427.8 740.1 427.2 750 430 C759.9 432.8 764.3 435.9 769.5 438 M665.5 437 C666.7 441.1 667.5 443.7 670 452.5 C672.5 461.3 674.3 460 675 470 C675.7 480 674.5 480.7 672.5 490 C670.5 499.3 667.5 497 667.5 505 C667.5 513 670.5 510.7 672.5 520 C674.5 529.3 675.7 529.3 675 540 C674.3 550.7 672.7 550 670 560 C667.3 570 667 569.5 665 577.5 C663 585.5 663.2 586.7 662.5 590 M650 385 C652.7 387.7 655.3 388.3 660 395 C664.7 401.7 666 400 667.5 410 C669 420 666 426.5 665.5 432.5 M769.5 438 C770.3 431.9 772.4 427.8 772.5 415 C772.6 402.2 770 403.3 770 390 C770 376.7 771.8 371.7 772.5 365 M769.5 438 C775 434.5 783.2 434.5 790 425 C796.8 415.5 793 414.5 795 402.5 C797 390.5 796.2 390 797.5 380 C798.8 370 799.3 369 800 365 M790 425 C792 421 791.5 416 797.5 410 C803.5 404 803.8 403.8 812.5 402.5 C821.2 401.2 822 405 830 405 C838 405 839.2 403.2 842.5 402.5 M769.5 438 C769 445.2 767.4 451.1 767.5 465 C767.6 478.9 768.7 476.7 770 490 C771.3 503.3 773.2 501.7 772.5 515 C771.8 528.3 769.5 526.7 767.5 540 C765.5 553.3 765 551.7 765 565 C765 578.3 766.8 583.3 767.5 590 M769.5 438 C773.6 440.5 776.9 443.6 785 447.5 C793.1 451.4 790.7 451.2 800 452.5 C809.3 453.8 810.7 453.2 820 452.5 C829.3 451.8 831 450.7 835 450 M835 450 C837 444.7 839.2 439.3 842.5 430 C845.8 420.7 847.5 422.3 847.5 415 C847.5 407.7 843.8 405.8 842.5 402.5 M835 450 C833.7 454 832.7 457.7 830 465 C827.3 472.3 827.3 471.7 825 477.5 C822.7 483.3 822.2 484.3 821.2 486.8 M800 452.5 C801.3 455.8 801.7 458.3 805 465 C808.3 471.7 808.2 471.7 812.5 477.5 C816.8 483.3 818.9 484.3 821.2 486.8 M821.2 486.8 C816.9 487.7 813.3 487.1 805 490 C796.7 492.9 797.3 494.2 790 497.5 C782.7 500.8 780.8 501.2 777.5 502.5 M835 450 C839 450.7 844 448.5 850 452.5 C856 456.5 854.2 458.3 857.5 465 C860.8 471.7 857.8 472.8 862.5 477.5 C867.2 482.2 871.7 481.2 875 482.5 M876.2 495 C879.9 493.7 881 491.3 890 490 C899 488.7 900.7 489.3 910 490 C919.3 490.7 917.7 491 925 492.5 C932.3 494 934.2 494.9 937.5 495.8 M937.5 495.8 C934.2 498.9 929.7 502.4 925 507.5 C920.3 512.6 921.3 513 920 515 M937.5 495.8 C939.5 500.9 943.7 504.5 945 515 C946.3 525.5 942.5 525 942.5 535 C942.5 545 944.3 547.8 945 552.5 M937.5 495.8 L950 490 M937.5 495.8 C936.2 492.9 932.5 491.9 932.5 485 C932.5 478.1 936.2 474 937.5 470 M769.5 438 C765.6 441.2 762.2 443.5 755 450 C747.8 456.5 749.2 457.2 742.5 462.5 C735.8 467.8 736 464.7 730 470 C724 475.3 724.7 475.8 720 482.5 C715.3 489.2 714.5 491.7 712.5 495 M730 437.5 C730.7 441.5 729.2 445.8 732.5 452.5 C735.8 459.2 739.8 459.8 742.5 462.5 M842.5 402.5 C846.5 404.5 848.8 407.3 857.5 410 C866.2 412.7 867.7 408.5 875 412.5 C882.3 416.5 882.3 421.7 885 425 M897.5 440 C902.2 439.3 906.3 436.8 915 437.5 C923.7 438.2 923.3 437.8 930 442.5 C936.7 447.2 934.7 450.3 940 455 C945.3 459.7 947.3 458.7 950 460 M895 402.5 C899 401.2 902 400.8 910 397.5 C918 394.2 914.3 394.7 925 390 C935.7 385.3 943.3 382.7 950 380 M862.5 365 C865.8 366.3 867.7 368 875 370 C882.3 372 886 371.8 890 372.5 M937.5 495.8 C940.8 490.3 942.7 483.2 950 475 C957.3 466.8 955.7 468.7 965 465 C974.3 461.3 974.3 462.5 985 461.2 C995.7 459.9 994 459.7 1005 460 C1016 460.3 1014.2 462.8 1026.2 462.5 C1038.2 462.2 1037 460.1 1050 458.8 C1063 457.5 1064.3 457.2 1075 457.5 C1085.7 457.8 1080 458 1090 460 C1100 462 1101 463.7 1112.5 465 C1124 466.3 1123.2 464.7 1133.2 465 C1143.2 465.3 1141.5 466.5 1150 466.2 C1158.5 465.9 1158.3 465.5 1165 463.8 C1171.7 462.1 1169.5 459 1175 460 C1180.5 461 1179.1 464.2 1185.8 467.5 C1192.5 470.8 1196.2 471.2 1200 472.5 M937.5 495.8 C942.2 498.3 945 501.5 955 505 C965 508.5 965 508.1 975 508.8 C985 509.5 983.8 508.5 992.5 507.5 C1001.2 506.5 1000.2 507.7 1007.5 505 C1014.8 502.3 1011.3 500.2 1020 497.5 C1028.7 494.8 1030.7 495.3 1040 495 C1049.3 494.7 1047 495.5 1055 496.2 C1063 496.9 1066 497.2 1070 497.5 M1026.2 462.5 C1029.9 465.8 1032.3 467.7 1040 475 C1047.7 482.3 1047 483.3 1055 490 C1063 496.7 1062 494 1070 500 C1078 506 1077 507.8 1085 512.5 C1093 517.2 1091.3 514.2 1100 517.5 C1108.7 520.8 1108.2 520.3 1117.5 525 C1126.8 529.7 1125.2 530 1135 535 C1144.8 540 1149.1 541.5 1154.2 543.8 M1154.2 543.8 C1159.7 545.5 1165.5 546.3 1175 550 C1184.5 553.7 1183.3 554.2 1190 557.5 C1196.7 560.8 1197.3 561.2 1200 562.5 M1154.2 543.8 C1157.1 539.5 1160.8 536.5 1165 527.5 C1169.2 518.5 1167.3 518.7 1170 510 C1172.7 501.3 1171.7 503 1175 495 C1178.3 487 1179.6 487.3 1182.5 480 C1185.4 472.7 1184.9 470.8 1185.8 467.5 M1162.5 365 C1159.8 367.7 1155.8 368.3 1152.5 375 C1149.2 381.7 1153.3 382 1150 390 C1146.7 398 1143.3 396.3 1140 405 C1136.7 413.7 1139.5 413.2 1137.5 422.5 C1135.5 431.8 1133.6 428.7 1132.5 440 C1131.4 451.3 1134.5 453 1133.2 465 C1131.9 477 1129.7 474.3 1127.5 485 C1125.3 495.7 1125.7 494.3 1125 505 C1124.3 515.7 1125 519.7 1125 525 M1026.2 462.5 C1024.5 467.2 1023 470.7 1020 480 C1017 489.3 1018.3 490.8 1015 497.5 C1011.7 504.2 1010.2 499 1007.5 505 C1004.8 511 1005 511.3 1005 520 C1005 528.7 1005.5 529.2 1007.5 537.5 C1009.5 545.8 1011.2 547.5 1012.5 551.2 M985 461.2 C984.3 466.2 981.8 469.7 982.5 480 C983.2 490.3 984.8 490.7 987.5 500 C990.2 509.3 989.2 505.7 992.5 515 C995.8 524.3 996.7 527 1000 535 C1003.3 543 1003.7 542.3 1005 545 M937.5 495.8 C938.8 500.9 940.8 504.5 942.5 515 C944.2 525.5 943.8 525.7 943.8 535 C943.8 544.3 938.8 544.7 942.5 550 C946.2 555.3 948.8 552.3 957.5 555 C966.2 557.7 970.3 558.7 975 560 M975 560 C979 558.7 980 557.3 990 555 C1000 552.7 1001.8 550.5 1012.5 551.2 C1023.2 551.9 1020 553.8 1030 557.5 C1040 561.2 1039.3 561 1050 565 C1060.7 569 1060.7 567.8 1070 572.5 C1079.3 577.2 1081 579.8 1085 582.5 M937.5 495.8 C934.2 498.9 929.7 503.7 925 507.5 C920.3 511.3 921.3 509.3 920 510 M900 437.5 C906.7 438.2 915 438.7 925 440 C935 441.3 932.2 437.8 937.5 442.5 C942.8 447.2 941.7 448.8 945 457.5 C948.3 466.2 948.7 470.3 950 475 M1026.2 462.5 C1023.2 458.5 1019.3 456.2 1015 447.5 C1010.7 438.8 1010 438.7 1010 430 C1010 421.3 1015 423.7 1015 415 C1015 406.3 1014 406.8 1010 397.5 C1006 388.2 1005.3 387.3 1000 380 C994.7 372.7 992.7 372.7 990 370 M1015 447.5 C1011 445.5 1007.3 441.3 1000 440 C992.7 438.7 992.2 437.2 987.5 442.5 C982.8 447.8 983.8 455.3 982.5 460 M1026.2 462.5 C1029.9 458.5 1033.7 452.2 1040 447.5 C1046.3 442.8 1042 444.3 1050 445 C1058 445.7 1059.3 446 1070 450 C1080.7 454 1084.7 457.3 1090 460 M1085 512.5 C1083.7 516.5 1084 520.2 1080 527.5 C1076 534.8 1073.3 532.7 1070 540 C1066.7 547.3 1066.8 547 1067.5 555 C1068.2 563 1071.2 566 1072.5 570 M1070 497.5 C1072.7 493.5 1076 491.2 1080 482.5 C1084 473.8 1083 471 1085 465 C1087 459 1086.8 461.3 1087.5 460 M1154.2 543.8 C1152.4 548.1 1149.6 551 1147.5 560 C1145.4 569 1146.2 569.5 1146.2 577.5 C1146.2 585.5 1147.2 586.7 1147.5 590 M1175 495 C1179 500.3 1183.3 508.3 1190 515 C1196.7 521.7 1197.3 518.7 1200 520 M955 505 C957.7 509 966.3 513.3 965 520 C963.7 526.7 956 526 950 530 C944 534 944.5 533.7 942.5 535 M1160 437.5 C1162.7 440.2 1166 441.5 1170 447.5 C1174 453.5 1173.7 456.7 1175 460 M975 508.8 C973 502.5 970.2 496.7 967.5 485 C964.8 473.3 965.7 470.3 965 465 M400 590 C399.3 594 399.5 597.7 397.5 605 C395.5 612.3 396.5 610.8 392.5 617.5 C388.5 624.2 389.8 623.8 382.5 630 C375.2 636.2 372.3 636.1 365 640.8 C357.7 645.5 357.7 645.7 355 647.5 M392.5 622.5 C397.8 622.5 401.8 621.2 412.5 622.5 C423.2 623.8 422.5 624.2 432.5 627.5 C442.5 630.8 442 631 450 635 C458 639 454.5 638.8 462.5 642.5 C470.5 646.2 470 645.1 480 648.8 C490 652.5 489.3 653.9 500 656.2 C510.7 658.5 510.7 657.8 520 657.5 C529.3 657.2 527.7 658.3 535 655 C542.3 651.7 541.5 651 547.5 645 C553.5 639 552 640 557.5 632.5 C563 625 565.2 621.1 568 617 M460 590 C461.3 594 464 597 465 605 C466 613 464.5 612.7 463.8 620 C463.1 627.3 462.8 626.5 462.5 632.5 C462.2 638.5 462.5 639.8 462.5 642.5 M557.5 590 C558.8 593.3 559.7 595.3 562.5 602.5 C565.3 609.7 566.5 613.1 568 617 M568 617 C570.5 621.1 571.6 625.7 577.5 632.5 C583.4 639.3 582 637.8 590 642.5 C598 647.2 598.2 647.3 607.5 650 C616.8 652.7 613.7 652.2 625 652.5 C636.3 652.8 643.3 651.5 650 651.2 M568 617 C571.2 613.8 571.5 610.2 580 605 C588.5 599.8 590.7 601.5 600 597.5 C609.3 593.5 611 592 615 590 M577.5 632.5 C577.8 637.8 578.8 641.8 578.8 652.5 C578.8 663.2 576.5 663.2 577.5 672.5 C578.5 681.8 579.2 681.5 582.5 687.5 C585.8 693.5 588 693 590 695 M355 700 C357.7 705.3 359.7 710 365 720 C370.3 730 368.3 729.5 375 737.5 C381.7 745.5 381.3 743.3 390 750 C398.7 756.7 396.8 755.7 407.5 762.5 C418.2 769.3 424 772 430 775.5 M430 775.5 C435.3 777.4 438 780.3 450 782.5 C462 784.7 463 783.1 475 783.8 C487 784.5 484.3 786 495 785 C505.7 784 505.7 780.3 515 780 C524.3 779.7 520.7 780.5 530 783.8 C539.3 787.1 540 787.5 550 792.5 C560 797.5 558.2 799.8 567.5 802.5 C576.8 805.2 576.3 804.5 585 802.5 C593.7 800.5 593 796.7 600 795 C607 793.3 608.2 795.9 611.2 796.2 M430 775.5 C434 769.4 438.3 762 445 752.5 C451.7 743 451.7 747.3 455 740 C458.3 732.7 456.2 734.3 457.5 725 C458.8 715.7 462 714.3 460 705 C458 695.7 452.7 694 450 690 M365 640.8 C364.3 644.6 359.8 646.5 362.5 655 C365.2 663.5 369.7 663.2 375 672.5 C380.3 681.8 380.8 680 382.5 690 C384.2 700 381.9 699.3 381.2 710 C380.5 720.7 379.7 722 380 730 C380.3 738 381.8 737.3 382.5 740 M650 765 C646.7 767.7 644.2 769.7 637.5 775 C630.8 780.3 632 779.3 625 785 C618 790.7 619.2 790.9 611.2 796.2 C603.2 801.5 604.7 800.7 595 805 C585.3 809.3 583 809.8 575 812.5 C567 815.2 567.7 814.3 565 815 M611.2 796.2 C608.2 791.9 605 788.3 600 780 C595 771.7 595.2 775.7 592.5 765 C589.8 754.3 590 752 590 740 C590 728 591.8 725.3 592.5 720 M430 775.5 C426 779.4 421 782.8 415 790 C409 797.2 410.2 795.8 407.5 802.5 C404.8 809.2 405.7 811.7 405 815 M650 652.5 C652.7 651.8 654.7 652.7 660 650 C665.3 647.3 663.3 647.2 670 642.5 C676.7 637.8 677 637.8 685 632.5 C693 627.2 692.9 626.6 700 622.5 C707.1 618.4 705.1 621 711.8 617 C718.5 613 717.5 612.6 725 607.5 C732.5 602.4 732 602 740 598 C748 594 749 594.6 755 592.5 C761 590.4 760.5 590.7 762.5 590 M662 590 C664.7 592.7 667.2 594.7 672 600 C676.8 605.3 676.2 605.3 680 610 C683.8 614.7 684.2 613.5 686.2 617.5 C688.2 621.5 687.8 621 687.5 625 C687.2 629 685.7 630.5 685 632.5 M740 598 C742.7 600.5 744 603.3 750 607.5 C756 611.7 755.8 611.8 762.5 613.8 C769.2 615.8 767.7 614.4 775 615 C782.3 615.6 783.3 613.5 790 616.2 C796.7 618.9 797.3 617.9 800 625 C802.7 632.1 800 638.2 800 643 M772.5 590 C773.8 592.7 774.2 594.7 777.5 600 C780.8 605.3 781.7 605.7 785 610 C788.3 614.3 788.7 614.5 790 616.2 M800 615 C805.3 614.3 810.7 609.2 820 612.5 C829.3 615.8 827 622.2 835 627.5 C843 632.8 842 631.2 850 632.5 C858 633.8 857 633.8 865 632.5 C873 631.2 873.3 630.2 880 627.5 C886.7 624.8 885.3 624 890 622.5 C894.7 621 890.8 624.5 897.5 621.8 C904.2 619.1 905.7 617.6 915 612.5 C924.3 607.4 923.2 607.2 932.5 602.5 C941.8 597.8 945.3 597 950 595 M800 643 C803.3 643.9 805.8 643.7 812.5 646.2 C819.2 648.7 817.7 650.2 825 652.5 C832.3 654.8 834.7 656.3 840 655 C845.3 653.7 842.3 652.2 845 647.5 C847.7 642.8 844.7 641.5 850 637.5 C855.3 633.5 861 633.8 865 632.5 M825 602.5 L820 612.5 M650 652.5 C651.3 655.8 653 656.3 655 665 C657 673.7 657.5 675 657.5 685 C657.5 695 656.3 693.2 655 702.5 C653.7 711.8 651.8 710 652.5 720 C653.2 730 658.2 730.7 657.5 740 C656.8 749.3 652 751 650 755 M1087.5 590 C1089.5 594 1091.7 596.3 1095 605 C1098.3 613.7 1097.3 613.2 1100 622.5 C1102.7 631.8 1101.7 630.7 1105 640 C1108.3 649.3 1108.5 649.5 1112.5 657.5 C1116.5 665.5 1114.7 665.3 1120 670 C1125.3 674.7 1127.2 671 1132.5 675 C1137.8 679 1135.3 678.3 1140 685 C1144.7 691.7 1144 692.7 1150 700 C1156 707.3 1155.8 706.5 1162.5 712.5 C1169.2 718.5 1169 715.8 1175 722.5 C1181 729.2 1178.3 730.8 1185 737.5 C1191.7 744.2 1196 744.8 1200 747.5 M1098.8 607.5 C1102.5 606.2 1104.2 604.2 1112.5 602.5 C1120.8 600.8 1120.3 600.9 1130 601.2 C1139.7 601.5 1143.8 603.1 1148.8 603.8 M1147.5 590 C1147.8 593.7 1145.5 597.1 1148.8 603.8 C1152.1 610.5 1153.7 608 1160 615 C1166.3 622 1166.5 622 1172.5 630 C1178.5 638 1179.2 635.7 1182.5 645 C1185.8 654.3 1182.3 655.7 1185 665 C1187.7 674.3 1188.5 673.3 1192.5 680 C1196.5 686.7 1198 687.3 1200 690 M1148.8 603.8 C1149.1 608.8 1149 612.8 1150 622.5 C1151 632.2 1148.5 634.7 1152.5 640 C1156.5 645.3 1157 641.2 1165 642.5 C1173 643.8 1177.8 644.3 1182.5 645 M1152.5 640 C1151.8 645.3 1153.3 650.7 1150 660 C1146.7 669.3 1144.7 671 1140 675 C1135.3 679 1134.5 675 1132.5 675 M1112.5 602.5 L1115 590 M1090 600 C1092.7 599.3 1094 596.8 1100 597.5 C1106 598.2 1109.2 601.2 1112.5 602.5 M1182.5 645 L1200 647.5 M1172.5 630 C1176.5 629.3 1180.2 630.2 1187.5 627.5 C1194.8 624.8 1196.7 622 1200 620 M900 617.5 C904 614.8 906.3 612.2 915 607.5 C923.7 602.8 923.2 603.3 932.5 600 C941.8 596.7 942 597.7 950 595 C958 592.3 959.2 591.3 962.5 590 M611.2 796.2 C606.9 797.9 604.7 798.8 595 802.5 C585.3 806.2 585.5 806.2 575 810 C564.5 813.8 565.1 812.8 555.8 816.8 C546.5 820.8 548.2 819.5 540 825 C531.8 830.5 531.7 830.2 525 837.5 C518.3 844.8 519.7 843.8 515 852.5 C510.3 861.2 511.5 861.3 507.5 870 C503.5 878.7 504.7 878.3 500 885 C495.3 891.7 494.7 891 490 895 C485.3 899 484.5 898.7 482.5 900 M407.5 807.5 C406.5 812.2 405.1 813.7 403.8 825 C402.5 836.3 400.8 838 402.5 850 C404.2 862 404 860 410 870 C416 880 418.3 879.5 425 887.5 C431.7 895.5 432.3 896.7 435 900 M621.7 181.7 C623.9 185.2 626.5 187.5 630 195 C633.5 202.5 631.5 202.5 635 210 C638.5 217.5 638 217.5 643.3 223.3 C648.6 229.1 648.8 227.7 655 231.7 C661.2 235.7 663.6 236.5 666.7 238.3 M635 186.7 C638.1 188.9 641.4 190.1 646.7 195 C652 199.9 649.7 201 655 205 C660.3 209 660.9 206.5 666.7 210 C672.5 213.5 674 216.1 676.7 218.3 M630 160 C634.5 159.5 637.8 160.5 646.7 158.3 C655.6 156.1 654.4 154.8 663.3 151.7 C672.2 148.6 672.9 148.5 680 146.7 C687.1 144.9 687.3 145.5 690 145 M593.3 236.7 C597.8 235.4 600.2 232.2 610 231.7 C619.8 231.2 621.1 233.7 630 235 C638.9 236.3 633.5 235.8 643.3 236.7 C653.1 237.6 660.5 237.9 666.7 238.3 M641.7 230 C641.2 234.9 640 239 640 248.3 C640 257.6 639 256.1 641.7 265 C644.4 273.9 646.5 275 650 281.7 C653.5 288.4 653.7 287.8 655 290"/>
<path fill="#f9c97f" d="M598.3 158.3 C601.8 155.2 604.8 156.2 613.3 156.7 C621.8 157.2 620.2 159.6 630 160 C639.8 160.4 644.2 156.1 650 158.3 C655.8 160.5 655.7 164.7 651.7 168.3 C647.7 171.9 640.8 169 635 171.7 C629.2 174.4 634.9 175.2 630 178.3 C625.1 181.4 622.9 183.7 616.7 183.3 C610.5 182.9 611.2 180.7 606.7 176.7 C602.2 172.7 602.2 173.2 600 168.3 C597.8 163.4 594.8 161.4 598.3 158.3Z"/>
<path fill="none" stroke="#5a5a5a" stroke-width="1.9" stroke-linejoin="round" d="M950 181.2 C948.8 183.9 944.6 191.9 942.5 197.5 C940.4 203.1 939.2 209.2 937.5 215 C935.8 220.8 933.8 226.7 932.5 232.5 C931.2 238.3 930.8 244.6 930 250 C929.2 255.4 927.1 260.4 927.5 265 C927.9 269.6 930.4 274.6 932.5 277.5 C934.6 280.4 937.1 281.4 940 282.5 C942.9 283.6 948.3 283.6 950 283.8 M932.5 280 C930.8 281.2 926.2 285.8 922.5 287.5 C918.8 289.2 914.2 290 910 290 C905.8 290 899.8 286.7 897.5 287.5 C895.2 288.3 897.5 292.9 896.2 295 C895 297.1 889.8 298.8 890 300 C890.2 301.2 897.5 300 897.5 302.5 C897.5 305 893.8 310.4 890 315 C886.2 319.6 879.2 326.2 875 330 C870.8 333.8 867.1 333.8 865 337.5 C862.9 341.2 865 347.9 862.5 352.5 C860 357.1 852.1 362.9 850 365 M930 143.8 C931.7 144.4 936.7 146.1 940 147.5 C943.3 148.9 948.3 151.7 950 152.5 M930 143.8 C933.3 145.2 944.2 149.8 950 152.5 C955.8 155.2 963.8 157.1 965 160 C966.2 162.9 960.4 166.2 957.5 170 C954.6 173.8 949.2 180.4 947.5 182.5 M950 283.8 C951.2 283.6 954.2 283.1 957.5 282.5 C960.8 281.9 966.2 282.1 970 280 C973.8 277.9 977.1 272.9 980 270 C982.9 267.1 984.6 263.3 987.5 262.5 C990.4 261.7 995.4 263.8 997.5 265 C999.6 266.2 997.5 269.6 1000 270 C1002.5 270.4 1007.5 266.7 1012.5 267.5 C1017.5 268.3 1023.8 271.7 1030 275 C1036.2 278.3 1046.7 285.4 1050 287.5 M1050 287.5 C1051.7 286.2 1056.2 280.4 1060 280 C1063.8 279.6 1069.2 282.5 1072.5 285 C1075.8 287.5 1077.5 292.5 1080 295 C1082.5 297.5 1086.5 298.1 1087.5 300 C1088.5 301.9 1085 305.4 1086.2 306.2 C1087.5 307 1092.7 307.7 1095 305 C1097.3 302.3 1098.8 294 1100 290 C1101.2 286 1100.4 282.4 1102.5 281.2 C1104.6 279.9 1108.8 281.9 1112.5 282.5 C1116.2 283.1 1121.7 282.9 1125 285 C1128.3 287.1 1128.8 293.1 1132.5 295 C1136.2 296.9 1142.1 297.4 1147.5 296.2 C1152.9 294.9 1160.4 289.8 1165 287.5 C1169.6 285.2 1171.2 283.9 1175 282.5 C1178.8 281.1 1183.3 279.9 1187.5 278.8 C1191.7 277.8 1197.9 276.6 1200 276.2 M1050 287.5 C1050.6 288.8 1054.2 292.1 1053.8 295 C1053.4 297.9 1048.8 301.7 1047.5 305 C1046.2 308.3 1046.6 311.5 1046.2 315 C1045.8 318.5 1042.7 323.7 1045 326.2 C1047.3 328.7 1055.4 328.1 1060 330 C1064.6 331.9 1068.3 335.4 1072.5 337.5 C1076.7 339.6 1080.8 342.9 1085 342.5 C1089.2 342.1 1094.6 335.4 1097.5 335 C1100.4 334.6 1102.1 337.1 1102.5 340 C1102.9 342.9 1100.4 348.3 1100 352.5 C1099.6 356.7 1100 362.9 1100 365 M1102.5 340 C1105 341.2 1112.5 345.8 1117.5 347.5 C1122.5 349.2 1128.3 351.2 1132.5 350 C1136.7 348.8 1137.5 342.9 1142.5 340 C1147.5 337.1 1155.8 334.2 1162.5 332.5 C1169.2 330.8 1176.2 331.2 1182.5 330 C1188.8 328.8 1197.1 325.8 1200 325 M847.5 365 C846.7 366.7 843.8 371.2 842.5 375 C841.2 378.8 840.8 382.9 840 387.5 C839.2 392.1 835.8 400.8 837.5 402.5 C839.2 404.2 846.7 399.6 850 397.5 C853.3 395.4 854.2 392.5 857.5 390 C860.8 387.5 865.4 383.8 870 382.5 C874.6 381.2 882.5 382.5 885 382.5 M885 382.5 C885.2 385 885 392.9 886.2 397.5 C887.5 402.1 890.2 405.8 892.5 410 C894.8 414.2 900.4 418.8 900 422.5 C899.6 426.2 892.3 429.2 890 432.5 C887.7 435.8 885 440 886.2 442.5 C887.5 445 894.8 444.6 897.5 447.5 C900.2 450.4 900.8 456.2 902.5 460 C904.2 463.8 907.9 466.2 907.5 470 C907.1 473.8 903.8 479.6 900 482.5 C896.2 485.4 889 485.4 885 487.5 C881 489.6 876.6 491.7 876.2 495 C875.8 498.3 880.2 503.8 882.5 507.5 C884.8 511.2 887.1 514.6 890 517.5 C892.9 520.4 899.6 521.7 900 525 C900.4 528.3 894.2 533.3 892.5 537.5 C890.8 541.7 888.8 545.8 890 550 C891.2 554.2 895 559.2 900 562.5 C905 565.8 913.8 568.3 920 570 C926.2 571.7 934.2 570.4 937.5 572.5 C940.8 574.6 940.8 579.6 940 582.5 C939.2 585.4 933.8 588.8 932.5 590 M900 425 C902.5 424.8 910 424.6 915 423.8 C920 423 924.2 421.1 930 420 C935.8 418.9 946.7 417.9 950 417.5 M900 417.5 C900.8 418.8 902.1 424.2 905 425 C907.9 425.8 912.9 423.8 917.5 422.5 C922.1 421.2 927.5 418.1 932.5 417.5 C937.5 416.9 942.9 420.5 947.5 418.8 C952.1 417.1 957.1 411.9 960 407.5 C962.9 403.1 962.5 397.1 965 392.5 C967.5 387.9 972.1 382.1 975 380 C977.9 377.9 981.2 377.9 982.5 380 C983.8 382.1 980.8 388.3 982.5 392.5 C984.2 396.7 988.8 402.1 992.5 405 C996.2 407.9 1002.1 407.1 1005 410 C1007.9 412.9 1008.3 419.2 1010 422.5 C1011.7 425.8 1013.5 429.6 1015 430 C1016.5 430.4 1018.4 427.5 1018.8 425 C1019.2 422.5 1016.5 418.8 1017.5 415 C1018.5 411.2 1022.5 406.7 1025 402.5 C1027.5 398.3 1030.8 394.6 1032.5 390 C1034.2 385.4 1033.3 377.5 1035 375 C1036.7 372.5 1040.4 373.3 1042.5 375 C1044.6 376.7 1044.6 382.5 1047.5 385 C1050.4 387.5 1055.4 389.6 1060 390 C1064.6 390.4 1070.8 386.7 1075 387.5 C1079.2 388.3 1083.8 395.8 1085 395 C1086.2 394.2 1083.8 386.2 1082.5 382.5 C1081.2 378.8 1077.1 375.4 1077.5 372.5 C1077.9 369.6 1083.8 366.2 1085 365 M1092.5 365 C1093.8 365.8 1097.9 370 1100 370 C1102.1 370 1104.2 365.8 1105 365 M377.5 636.2 C378.3 637 380 639.9 382.5 641.2 C385 642.5 390 642.3 392.5 643.8 C395 645.3 396.9 647.3 397.5 650 C398.1 652.7 395.4 657.9 396.2 660 C397 662.1 400.8 662.7 402.5 662.5 C404.2 662.3 404.1 658.4 406.2 658.8 C408.3 659.2 411.4 663.3 415 665 C418.6 666.7 423.8 668 427.5 668.8 C431.2 669.6 435 668.5 437.5 670 C440 671.5 440.4 675.4 442.5 677.5 C444.6 679.6 446.7 682.3 450 682.5 C453.3 682.7 459.2 678.4 462.5 678.8 C465.8 679.2 467.1 683.1 470 685 C472.9 686.9 475.8 689.4 480 690 C484.2 690.6 491.2 688.6 495 688.8 C498.8 689 497.9 691 502.5 691.2 C507.1 691.4 519.2 691.9 522.5 690 C525.8 688.1 521.2 681.9 522.5 680 C523.8 678.1 526.7 678.2 530 678.8 C533.3 679.4 537.9 681.9 542.5 683.8 C547.1 685.7 553.8 688.1 557.5 690 C561.2 691.9 562.9 693.8 565 695 C567.1 696.2 567.1 697.1 570 697.5 C572.9 697.9 578.3 696.7 582.5 697.5 C586.7 698.3 592.1 700.4 595 702.5 C597.9 704.6 599.2 707.5 600 710 C600.8 712.5 597.9 716.9 600 717.5 C602.1 718.1 608.8 714.6 612.5 713.8 C616.2 713 619.2 711.7 622.5 712.5 C625.8 713.3 629.2 718 632.5 718.8 C635.8 719.6 639.6 718.5 642.5 717.5 C645.4 716.5 648.8 713.3 650 712.5 M567.5 697.5 C568.8 697.1 572.1 694.6 575 695 C577.9 695.4 583.8 697.9 585 700 C586.2 702.1 584.6 705.8 582.5 707.5 C580.4 709.2 575 710.4 572.5 710 C570 709.6 568.3 707.1 567.5 705 C566.7 702.9 567.5 698.8 567.5 697.5 M650 710 C651.7 709.8 656.7 708.4 660 708.8 C663.3 709.2 668.3 711.9 670 712.5 M925 590 C925.4 591.2 927.3 595.4 927.5 597.5 C927.7 599.6 926.4 601.7 926.2 602.5"/>
<g fill="#fff" stroke="#555" stroke-width="1.2"><circle cx="382.5" cy="233.2" r="2.1"/><circle cx="389.5" cy="312" r="2.6"/><circle cx="522.5" cy="296.8" r="2.1"/><circle cx="621.2" cy="166.2" r="2.6"/><circle cx="940.5" cy="192.5" r="2.1"/><circle cx="980.5" cy="153" r="2.1"/><circle cx="1026.8" cy="174.2" r="2.6"/><circle cx="1127.5" cy="210.8" r="2.1"/><circle cx="1168.2" cy="231.2" r="2.6"/><circle cx="988" cy="298.8" r="2.6"/><circle cx="414.5" cy="403.8" r="2.1"/><circle cx="557" cy="431.8" r="2.1"/><circle cx="447.5" cy="515.8" r="2.6"/><circle cx="665.5" cy="437" r="2.1"/><circle cx="769.5" cy="438" r="2.6"/><circle cx="842.5" cy="402.5" r="2.6"/><circle cx="821.2" cy="486.8" r="2.1"/><circle cx="937.5" cy="495.8" r="2.6"/><circle cx="1026.2" cy="462.5" r="2.6"/><circle cx="1133.2" cy="465" r="2.1"/><circle cx="1185.8" cy="467.5" r="2.1"/><circle cx="1154.2" cy="543.8" r="2.6"/><circle cx="1012.5" cy="551.2" r="2.6"/><circle cx="365" cy="640.8" r="2.1"/><circle cx="568" cy="617" r="2.6"/><circle cx="430" cy="775.5" r="2.6"/><circle cx="611.2" cy="796.2" r="2.6"/><circle cx="647.5" cy="748.2" r="2.1"/><circle cx="711.8" cy="617" r="2.6"/><circle cx="740" cy="598" r="2.1"/><circle cx="800" cy="643" r="2.6"/><circle cx="897.5" cy="621.8" r="2.1"/><circle cx="1098.8" cy="607.5" r="2.1"/><circle cx="1148.8" cy="603.8" r="2.6"/><circle cx="555.8" cy="816.8" r="2.1"/></g>
<g stroke="#fff" stroke-width="2.4" stroke-opacity="0.85" stroke-linejoin="round" paint-order="stroke">
<text x="358.8" y="223.8" font-size="13" fill="#5e5e5e" textLength="45.0" lengthAdjust="spacingAndGlyphs">Rennes</text>
<text x="363.8" y="301.3" font-size="16" fill="#333" textLength="51.2" lengthAdjust="spacingAndGlyphs">Nantes</text>
<text x="505.5" y="287.5" font-size="13.5" fill="#4c4c4c" textLength="34.5" lengthAdjust="spacingAndGlyphs">Tours</text>
<text x="605.0" y="156.3" font-size="13.5" fill="#444" textLength="31.3" lengthAdjust="spacingAndGlyphs">Paris</text>
<text x="596.0" y="372.0" font-size="19.5" font-weight="bold" fill="#2e2e2e" textLength="63.0" lengthAdjust="spacingAndGlyphs">France</text>
<text x="867.5" y="198.0" font-size="13.5" fill="#5a5a5a" textLength="67.5" lengthAdjust="spacingAndGlyphs">Strasbourg</text>
<text x="915.0" y="158.8" font-size="13.5" fill="#5a5a5a" textLength="57.5" lengthAdjust="spacingAndGlyphs">Karlsruhe</text>
<text x="916.0" y="353.8" font-size="13" font-weight="bold" fill="#333" textLength="74.0" lengthAdjust="spacingAndGlyphs">Switzerland</text>
<text x="993.8" y="163.8" font-size="16" fill="#444" textLength="63.7" lengthAdjust="spacingAndGlyphs">Stuttgart</text>
<text x="1062.5" y="216.0" font-size="13.5" fill="#5a5a5a" textLength="58.5" lengthAdjust="spacingAndGlyphs">Augsburg</text>
<text x="1145.0" y="221.0" font-size="14.5" fill="#444" textLength="46.0" lengthAdjust="spacingAndGlyphs">Munich</text>
<text x="966.0" y="287.5" font-size="16" fill="#444" textLength="44.0" lengthAdjust="spacingAndGlyphs">Zurich</text>
<text x="1045.0" y="323.8" font-size="13.5" font-weight="bold" fill="#333" textLength="92.5" lengthAdjust="spacingAndGlyphs">Liechtenstein</text>
<text x="377.5" y="393.8" font-size="13.5" fill="#5a5a5a" textLength="71.3" lengthAdjust="spacingAndGlyphs">La Rochelle</text>
<text x="530.0" y="421.3" font-size="13.5" fill="#5a5a5a" textLength="53.8" lengthAdjust="spacingAndGlyphs">Limoges</text>
<text x="417.5" y="505.5" font-size="15" fill="#444" textLength="58.8" lengthAdjust="spacingAndGlyphs">Bordeaux</text>
<text x="610.0" y="426.3" font-size="13.5" fill="#585858" textLength="107.5" lengthAdjust="spacingAndGlyphs">Clermont-Ferrand</text>
<text x="752.5" y="426.3" font-size="16" fill="#333" textLength="33.8" lengthAdjust="spacingAndGlyphs">Lyon</text>
<text x="818.8" y="388.8" font-size="16" fill="#444" textLength="53.7" lengthAdjust="spacingAndGlyphs">Geneva</text>
<text x="793.0" y="476.3" font-size="13.5" fill="#666" textLength="57.0" lengthAdjust="spacingAndGlyphs">Grenoble</text>
<text x="920.0" y="485.0" font-size="16" fill="#444" textLength="35.0" lengthAdjust="spacingAndGlyphs">Turin</text>
<text x="1008.8" y="452.5" font-size="15" fill="#444" textLength="35.7" lengthAdjust="spacingAndGlyphs">Milan</text>
<text x="1111.0" y="455.0" font-size="13.5" fill="#5a5a5a" textLength="42.8" lengthAdjust="spacingAndGlyphs">Verona</text>
<text x="1165.0" y="489.5" font-size="13.5" fill="#5a5a5a" textLength="39.0" lengthAdjust="spacingAndGlyphs">Padua</text>
<text x="1125.0" y="532.5" font-size="16" fill="#383838" textLength="58.8" lengthAdjust="spacingAndGlyphs">Bologna</text>
<text x="989.5" y="540.0" font-size="15" fill="#444" textLength="45.0" lengthAdjust="spacingAndGlyphs">Genoa</text>
<text x="321.0" y="630.5" font-size="13" fill="#585858" textLength="87.0" lengthAdjust="spacingAndGlyphs">San Sebastián</text>
<text x="535.5" y="606.0" font-size="16" fill="#383838" textLength="64.5" lengthAdjust="spacingAndGlyphs">Toulouse</text>
<text x="396.0" y="763.0" font-size="16" fill="#383838" textLength="66.5" lengthAdjust="spacingAndGlyphs">Zaragoza</text>
<text x="579.5" y="787.5" font-size="15" fill="#444" textLength="61.5" lengthAdjust="spacingAndGlyphs">Barcelona</text>
<text x="553.8" y="708.8" font-size="12" font-weight="bold" fill="#333" textLength="46.2" lengthAdjust="spacingAndGlyphs">Andorra</text>
<text x="628.7" y="738.4" font-size="13" fill="#666" textLength="40.8" lengthAdjust="spacingAndGlyphs">Girona</text>
<text x="525.0" y="837.5" font-size="13.5" fill="#585858" textLength="61.0" lengthAdjust="spacingAndGlyphs">Tarragona</text>
<text x="671.0" y="640.0" font-size="16" fill="#383838" textLength="81.0" lengthAdjust="spacingAndGlyphs">Montpellier</text>
<text x="723.8" y="588.5" font-size="13" fill="#666" textLength="35.0" lengthAdjust="spacingAndGlyphs">Nîmes</text>
<text x="767.5" y="631.0" font-size="16" fill="#383838" textLength="65.0" lengthAdjust="spacingAndGlyphs">Marseille</text>
<text x="874.5" y="642.5" font-size="13.5" fill="#585858" textLength="45.5" lengthAdjust="spacingAndGlyphs">Cannes</text>
<text x="898.8" y="611.0" font-size="12.5" font-weight="bold" fill="#333" textLength="45.0" lengthAdjust="spacingAndGlyphs">Monaco</text>
<text x="1086.0" y="597.0" font-size="13" fill="#585858" textLength="25.0" lengthAdjust="spacingAndGlyphs">Pisa</text>
<text x="1118.0" y="627.5" font-size="16" fill="#383838" textLength="60.8" lengthAdjust="spacingAndGlyphs">Florence</text>
<text x="999.5" y="750.0" font-size="13" fill="#585858" textLength="31.5" lengthAdjust="spacingAndGlyphs">Corse</text>
</g>
<!-- markers -->
<g id="mk">
<g transform="translate(767.900,436.800)"><path d="M0 0 C-1.500 -16 -12.800 -22 -12.800 -35 A12.800 12.800 0 0 1 12.800 -35 C12.800 -22 1.500 -16 0 0z" fill="#f34a3f" stroke="#c4352b" stroke-width="1"/><circle cx="0" cy="-35" r="4" fill="#2a0605"/></g>
<g transform="translate(711.500,616.700)"><path d="M0 0 C-1.500 -16 -12.800 -22 -12.800 -35 A12.800 12.800 0 0 1 12.800 -35 C12.800 -22 1.500 -16 0 0z" fill="#f34a3f" stroke="#c4352b" stroke-width="1"/><circle cx="0" cy="-35" r="4" fill="#2a0605"/></g>
<g transform="translate(800.500,641.500)"><path d="M0 0 C-1.500 -16 -12.800 -22 -12.800 -35 A12.800 12.800 0 0 1 12.800 -35 C12.800 -22 1.500 -16 0 0z" fill="#f34a3f" stroke="#c4352b" stroke-width="1"/><circle cx="0" cy="-35" r="4" fill="#2a0605"/></g>
</g>
<!-- zoom control -->
<rect x="1142" y="791" width="44" height="88" rx="1.500" fill="#eef4fc" fill-opacity="0.92"/>
<path d="M1147 835 H1181" stroke="#d9e2ee" stroke-width="1"/>
<path d="M1154 813 H1174 M1164 803 V823 M1154 857.500 H1174" stroke="#565656" stroke-width="3.200" fill="none"/>
<!-- google logo -->
<text x="365" y="888.500" font-size="21" textLength="62" lengthAdjust="spacingAndGlyphs" stroke="#fff" stroke-width="2" stroke-opacity="0.8" paint-order="stroke"><tspan fill="#4285f4">G</tspan><tspan fill="#ea4335">o</tspan><tspan fill="#fbbc05">o</tspan><tspan fill="#4285f4">g</tspan><tspan fill="#34a853">l</tspan><tspan fill="#ea4335">e</tspan></text>
<!-- copyright -->
<text x="637" y="896" font-size="11.500" fill="#444" stroke="#fff" stroke-width="2" stroke-opacity="0.7" paint-order="stroke" textLength="566" lengthAdjust="spacingAndGlyphs">©2017 Google - Map data ©2017 GeoBasis-DE/BKG (©2009), Inst. Geogr. Nacional, Google</text>
<text x="0" y="0" transform="translate(584,899) rotate(-55)" font-size="9" font-style="italic" fill="#8fb4e3">Balearic Sea</text>

</svg>
</div>
</body>
</html>
